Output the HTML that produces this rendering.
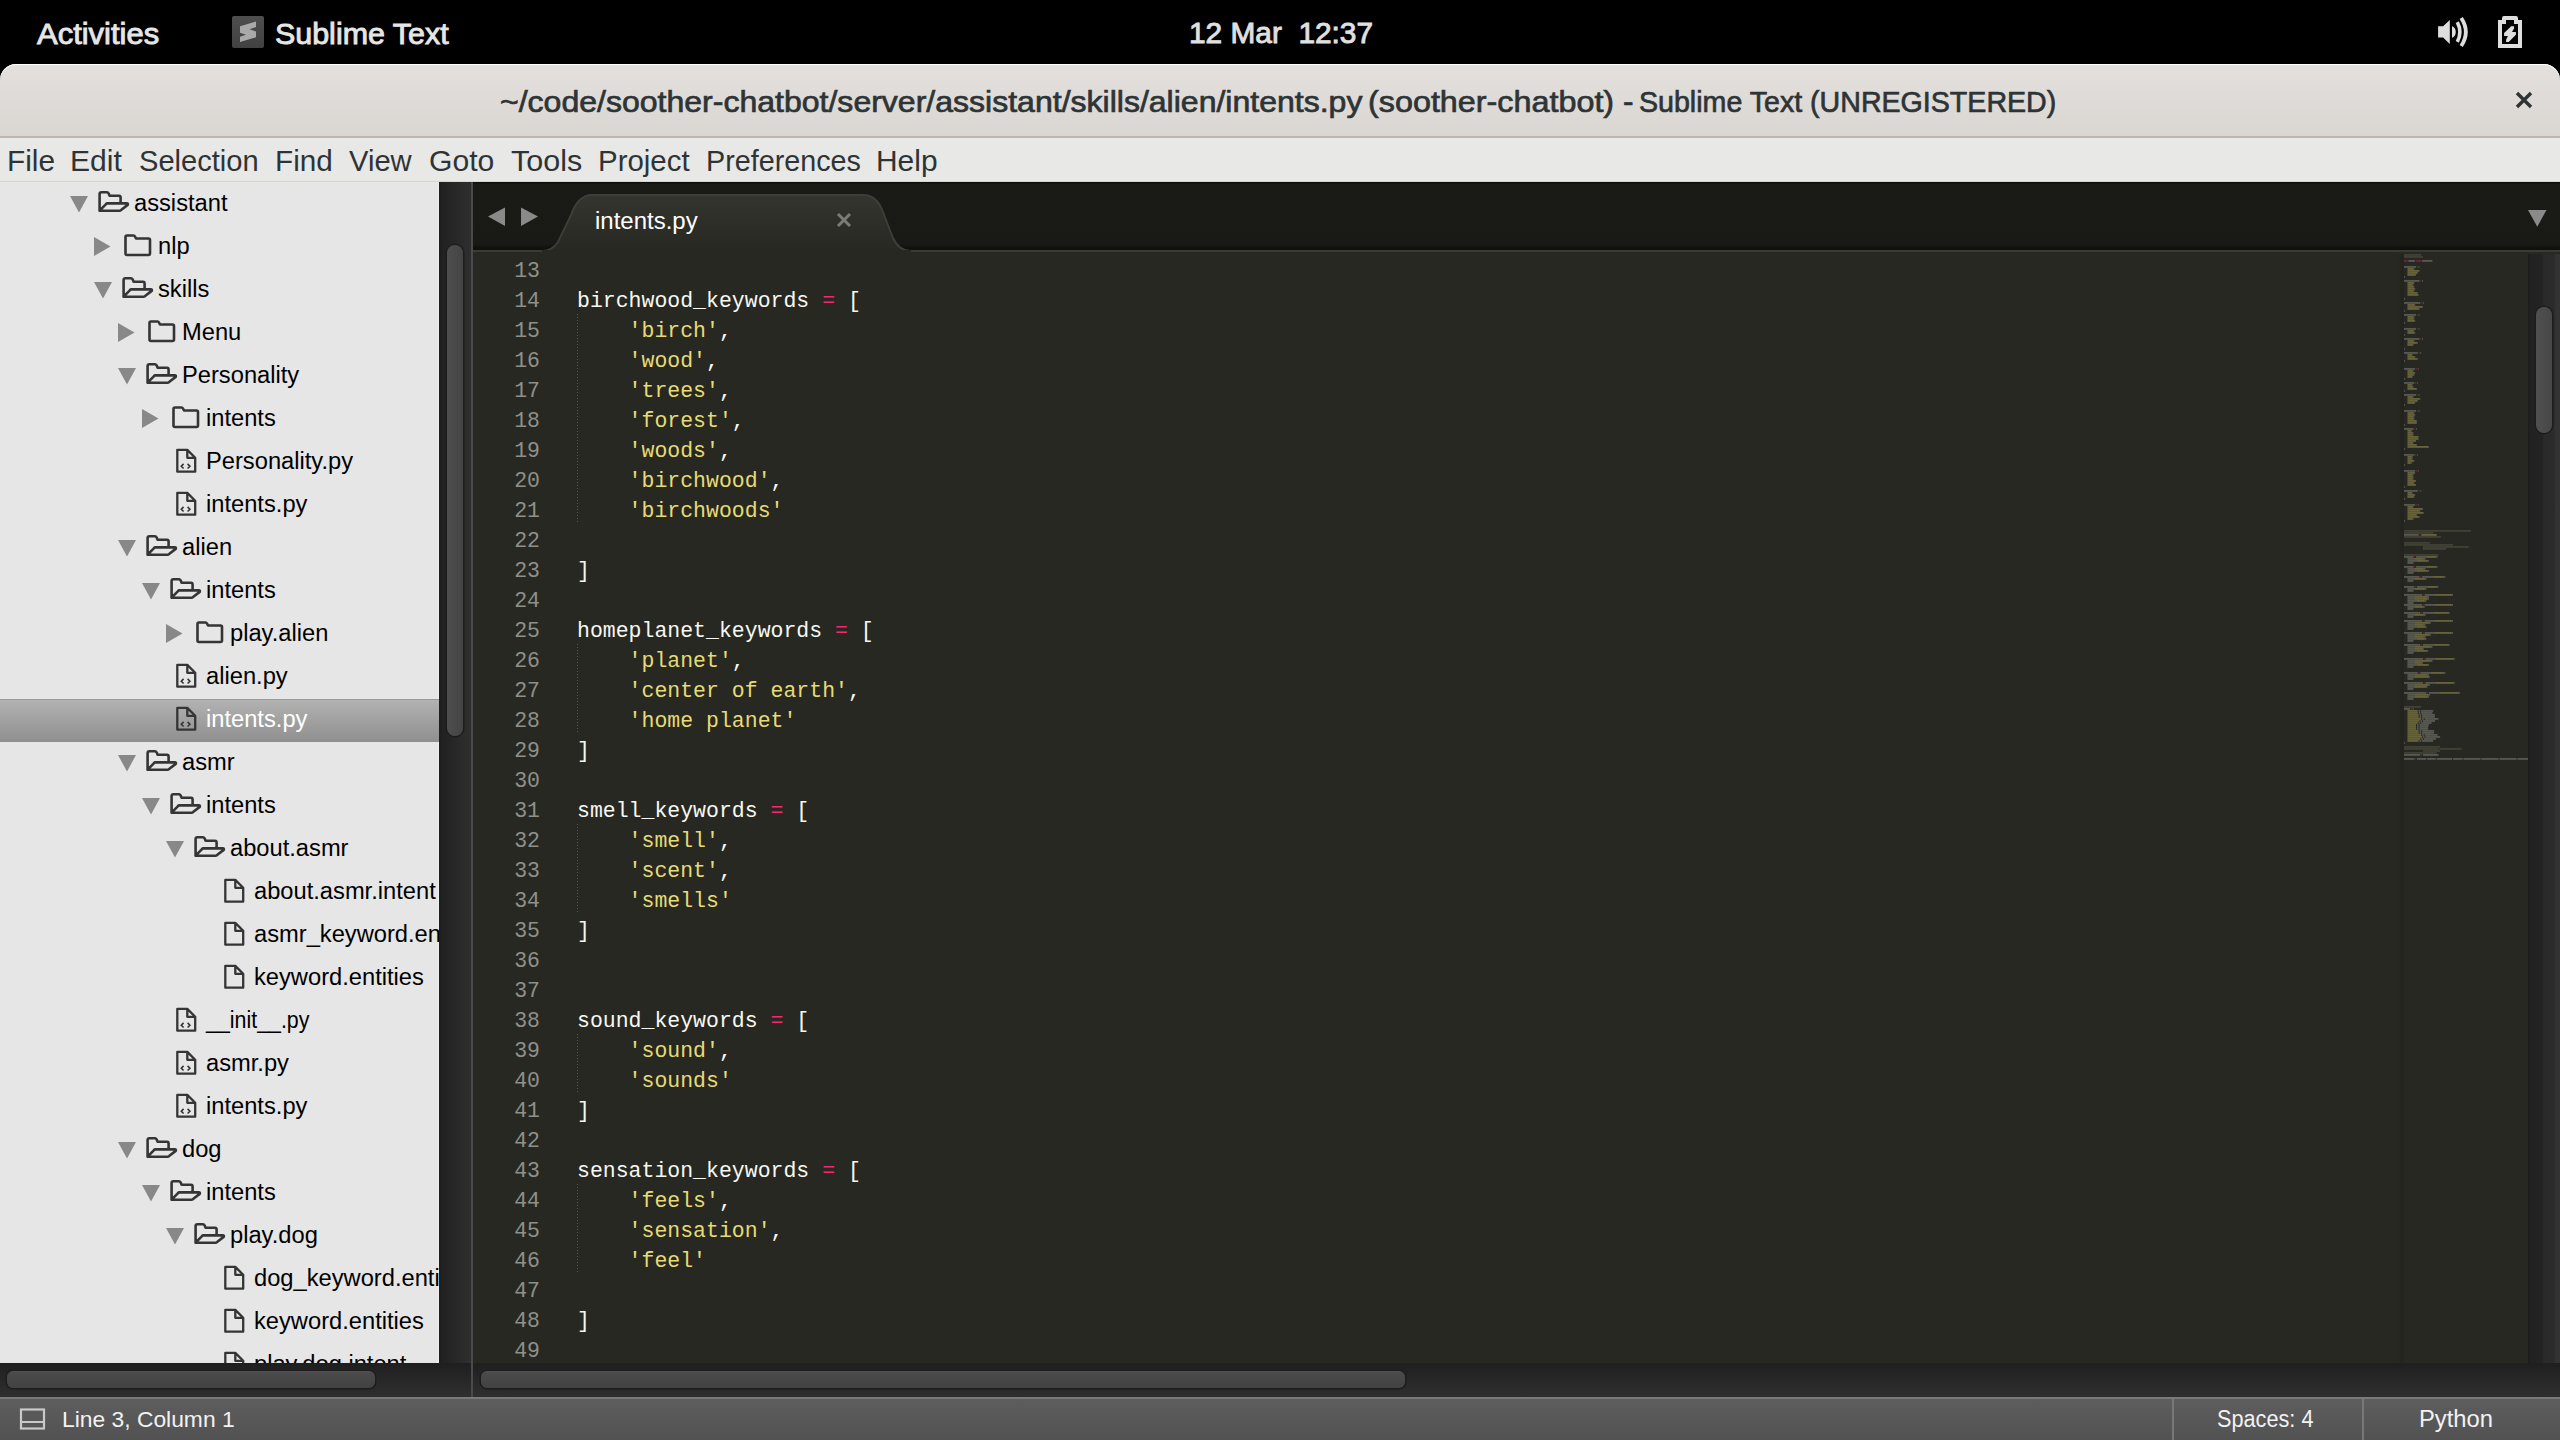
<!DOCTYPE html><html><head><meta charset="utf-8"><style>html,body{margin:0;padding:0;width:2560px;height:1440px;overflow:hidden;background:#000;position:relative}</style></head><body><div style="position:absolute;left:0px;top:0px;width:2560px;height:64px;background:#000"></div>
<div id="act" style="position:absolute;left:37.13px;top:16.28px;font:400 29.5px/35px 'Liberation Sans',sans-serif;color:#e6e6e6;white-space:pre;transform:scale(1.0494,1.0000);transform-origin:0 27.72px;-webkit-text-stroke:0.9px #e6e6e6;">Activities</div>
<svg style="position:absolute;left:232px;top:16px" width="32" height="32" viewBox="0 0 32 32">
<defs><linearGradient id="ig" x1="0" y1="0" x2="0" y2="1"><stop offset="0" stop-color="#4e4e4e"/><stop offset="1" stop-color="#414141"/></linearGradient></defs>
<rect x="0" y="0" width="32" height="32" rx="2" fill="url(#ig)"/>
<path d="M8 10.2 L24 5.6 L24 11.1 L17.5 13.2 L24 15.4 L24 21.3 L8 26.1 L8 20.7 L13.9 18.7 L8 16.8 Z" fill="#a9a9a9"/>
</svg>
<div id="st" style="position:absolute;left:275.00px;top:16.28px;font:400 29.5px/35px 'Liberation Sans',sans-serif;color:#e6e6e6;white-space:pre;transform:scale(1.0311,1.0000);transform-origin:0 27.72px;-webkit-text-stroke:0.9px #e6e6e6;">Sublime Text</div>
<div id="date" style="position:absolute;left:1188.76px;top:15.28px;font:400 29.5px/35px 'Liberation Sans',sans-serif;color:#e0e0e0;white-space:pre;transform:scale(1.0111,1.0000);transform-origin:0 27.72px;-webkit-text-stroke:0.9px #e0e0e0;">12 Mar  12:37</div>
<svg style="position:absolute;left:2436px;top:16px" width="34" height="32" viewBox="0 0 34 32">
<path d="M2.1 10.2 H7.1 L13.8 3.9 V27.9 L7.1 21.4 H2.1 Z" fill="#dedede"/>
<path d="M16 10.2 C21 11.5 21 20.4 16 21.7 Z" fill="#dedede"/>
<path d="M21.3 6.1 Q26.5 16 21.3 25.9" stroke="#dedede" stroke-width="3.6" fill="none"/>
<path d="M25.2 2 Q34.5 16 25.2 30" stroke="#dedede" stroke-width="3.8" fill="none"/>
</svg>
<svg style="position:absolute;left:2498px;top:16px" width="25" height="33" viewBox="0 0 25 33">
<path d="M6 0 H18 Q20 0 20 2 V4 H24 V32 H0 V4 H4 V2 Q4 0 6 0 Z M4 8 V28 H20 V8 H16 V4 H8 V8 Z" fill="#dedede" fill-rule="evenodd"/>
<path d="M13.2 10.2 H16 V12.4 L14 15.9 H17.9 V18.8 L10.7 25.9 H8.1 V23.8 L9.9 19.9 H6.1 V17.1 Z" fill="#dedede"/>
</svg>
<div style="position:absolute;left:0px;top:64px;width:2560px;height:73px;background:linear-gradient(#e3e0dd,#dad6d2);border-radius:16px 16px 0 0;box-shadow:inset 0 1px 0 #fff"></div>
<div style="position:absolute;left:0px;top:136px;width:2560px;height:2px;background:#bdb6af"></div>
<div id="title1" style="position:absolute;left:499.59px;top:83.60px;font:400 30px/36px 'Liberation Sans',sans-serif;color:#2e3436;white-space:pre;transform:scale(1.0675,1.0000);transform-origin:0 28.40px;-webkit-text-stroke:0.7px #2e3436;">~/code/soother-chatbot/server/assistant/skills/alien/intents.py</div>
<div id="title2" style="position:absolute;left:1368.38px;top:83.60px;font:400 30px/36px 'Liberation Sans',sans-serif;color:#2e3436;white-space:pre;transform:scale(1.0774,1.0000);transform-origin:0 28.40px;-webkit-text-stroke:0.7px #2e3436;">(soother-chatbot)</div>
<div id="title3" style="position:absolute;left:1622.75px;top:83.60px;font:400 30px/36px 'Liberation Sans',sans-serif;color:#2e3436;white-space:pre;transform:scale(1.0517,1.0000);transform-origin:0 28.40px;-webkit-text-stroke:0.7px #2e3436;">-</div>
<div id="title4" style="position:absolute;left:1639.41px;top:83.60px;font:400 30px/36px 'Liberation Sans',sans-serif;color:#2e3436;white-space:pre;transform:scale(0.9530,1.0000);transform-origin:0 28.40px;-webkit-text-stroke:0.7px #2e3436;">Sublime Text (UNREGISTERED)</div>
<svg style="position:absolute;left:2514px;top:90px" width="20" height="20" viewBox="0 0 20 20">
<path d="M3 3 L17 17 M17 3 L3 17" stroke="#2e3436" stroke-width="3.4" stroke-linecap="butt"/>
</svg>
<div style="position:absolute;left:0px;top:138px;width:2560px;height:43px;background:#e8e8e7"></div>
<div style="position:absolute;left:0px;top:181px;width:2560px;height:1px;background:#d5d5d3"></div>
<div id="m_File" style="position:absolute;left:7.00px;top:142.60px;font:400 30px/36px 'Liberation Sans',sans-serif;color:#2e3436;white-space:pre;transform:scale(0.9942,1.0000);transform-origin:0 28.40px;">File</div>
<div id="m_Edit" style="position:absolute;left:70.16px;top:142.60px;font:400 30px/36px 'Liberation Sans',sans-serif;color:#2e3436;white-space:pre;transform:scale(1.0029,1.0000);transform-origin:0 28.40px;">Edit</div>
<div id="m_Selection" style="position:absolute;left:138.78px;top:142.60px;font:400 30px/36px 'Liberation Sans',sans-serif;color:#2e3436;white-space:pre;transform:scale(0.9699,1.0000);transform-origin:0 28.40px;">Selection</div>
<div id="m_Find" style="position:absolute;left:274.84px;top:142.60px;font:400 30px/36px 'Liberation Sans',sans-serif;color:#2e3436;white-space:pre;transform:scale(0.9905,1.0000);transform-origin:0 28.40px;">Find</div>
<div id="m_View" style="position:absolute;left:348.70px;top:142.60px;font:400 30px/36px 'Liberation Sans',sans-serif;color:#2e3436;white-space:pre;transform:scale(0.9716,1.0000);transform-origin:0 28.40px;">View</div>
<div id="m_Goto" style="position:absolute;left:428.94px;top:142.60px;font:400 30px/36px 'Liberation Sans',sans-serif;color:#2e3436;white-space:pre;transform:scale(1.0041,1.0000);transform-origin:0 28.40px;">Goto</div>
<div id="m_Tools" style="position:absolute;left:510.81px;top:142.60px;font:400 30px/36px 'Liberation Sans',sans-serif;color:#2e3436;white-space:pre;transform:scale(1.0164,1.0000);transform-origin:0 28.40px;">Tools</div>
<div id="m_Project" style="position:absolute;left:598.03px;top:142.60px;font:400 30px/36px 'Liberation Sans',sans-serif;color:#2e3436;white-space:pre;transform:scale(0.9808,1.0000);transform-origin:0 28.40px;">Project</div>
<div id="m_Preferences" style="position:absolute;left:706.48px;top:142.60px;font:400 30px/36px 'Liberation Sans',sans-serif;color:#2e3436;white-space:pre;transform:scale(0.9578,1.0000);transform-origin:0 28.40px;">Preferences</div>
<div id="m_Help" style="position:absolute;left:875.64px;top:142.60px;font:400 30px/36px 'Liberation Sans',sans-serif;color:#2e3436;white-space:pre;transform:scale(0.9976,1.0000);transform-origin:0 28.40px;">Help</div>
<div style="position:absolute;left:0px;top:182px;width:439px;height:1181px;background:#e6e6e6"></div>
<div style="position:absolute;left:438px;top:182px;width:1px;height:1181px;background:#efefef"></div>
<div style="position:absolute;left:439px;top:182px;width:32px;height:1215px;background:linear-gradient(90deg,#1c1c1c 0px,#222 4px,#272727 16px,#2f2f2f 32px)"></div>
<div style="position:absolute;left:471px;top:182px;width:2px;height:1215px;background:#4a4a4a"></div>
<div style="position:absolute;left:447px;top:245px;width:16px;height:491px;background:linear-gradient(90deg,#4e4e4e,#444);border-radius:8.5px;box-shadow:0 0 0 1.5px #1d1d1d"></div>
<div style="position:absolute;left:0;top:182px;width:439px;height:1181px;overflow:hidden">
<svg style="position:absolute;left:70px;top:14px" width="18" height="17" viewBox="0 0 18 17"><path d="M0 0 H18 L9 16.5 Z" fill="#888888"/></svg>
<svg style="position:absolute;left:96px;top:9px" width="35" height="23" viewBox="0 0 35 23"><path d="M3.6 19.7 V3 Q3.6 1.3 5.3 1.3 H11 Q12 1.3 12.6 2.3 L13.6 4.8 H23 Q24.6 4.8 24.6 6.4 V11 M3.6 19.7 H23.8 Q24.8 19.7 25.4 18.8 L31.7 13.9 Q32.3 12.4 30.8 12.4 H11.6 Q10.4 12.4 9.8 13.3 Z" fill="none" stroke="#353535" stroke-width="2.6" stroke-linejoin="round"/></svg>
<div style="position:absolute;left:134.00px;top:7.03px;font:400 23px/28px 'Liberation Sans',sans-serif;color:#000000;white-space:pre;transform:scale(1.0300,1.0000);transform-origin:0 21.97px;">assistant</div>
<svg style="position:absolute;left:94px;top:54.5px" width="17" height="19" viewBox="0 0 17 19"><path d="M0 0 L16.5 9.5 L0 19 Z" fill="#888888"/></svg>
<svg style="position:absolute;left:124px;top:52px" width="28" height="23" viewBox="0 0 28 23"><path d="M1.5 3 Q1.5 1.5 3 1.5 H9.5 Q10.5 1.5 11 2.5 L12 4.5 H24.5 Q26 4.5 26 6 V19.5 Q26 21 24.5 21 H3 Q1.5 21 1.5 19.5 Z" fill="none" stroke="#353535" stroke-width="2.6" stroke-linejoin="round"/></svg>
<div style="position:absolute;left:158.00px;top:50.03px;font:400 23px/28px 'Liberation Sans',sans-serif;color:#000000;white-space:pre;transform:scale(1.0300,1.0000);transform-origin:0 21.97px;">nlp</div>
<svg style="position:absolute;left:94px;top:100px" width="18" height="17" viewBox="0 0 18 17"><path d="M0 0 H18 L9 16.5 Z" fill="#888888"/></svg>
<svg style="position:absolute;left:120px;top:95px" width="35" height="23" viewBox="0 0 35 23"><path d="M3.6 19.7 V3 Q3.6 1.3 5.3 1.3 H11 Q12 1.3 12.6 2.3 L13.6 4.8 H23 Q24.6 4.8 24.6 6.4 V11 M3.6 19.7 H23.8 Q24.8 19.7 25.4 18.8 L31.7 13.9 Q32.3 12.4 30.8 12.4 H11.6 Q10.4 12.4 9.8 13.3 Z" fill="none" stroke="#353535" stroke-width="2.6" stroke-linejoin="round"/></svg>
<div style="position:absolute;left:158.00px;top:93.03px;font:400 23px/28px 'Liberation Sans',sans-serif;color:#000000;white-space:pre;transform:scale(1.0300,1.0000);transform-origin:0 21.97px;">skills</div>
<svg style="position:absolute;left:118px;top:140.5px" width="17" height="19" viewBox="0 0 17 19"><path d="M0 0 L16.5 9.5 L0 19 Z" fill="#888888"/></svg>
<svg style="position:absolute;left:148px;top:138px" width="28" height="23" viewBox="0 0 28 23"><path d="M1.5 3 Q1.5 1.5 3 1.5 H9.5 Q10.5 1.5 11 2.5 L12 4.5 H24.5 Q26 4.5 26 6 V19.5 Q26 21 24.5 21 H3 Q1.5 21 1.5 19.5 Z" fill="none" stroke="#353535" stroke-width="2.6" stroke-linejoin="round"/></svg>
<div style="position:absolute;left:182.00px;top:136.03px;font:400 23px/28px 'Liberation Sans',sans-serif;color:#000000;white-space:pre;transform:scale(1.0300,1.0000);transform-origin:0 21.97px;">Menu</div>
<svg style="position:absolute;left:118px;top:186px" width="18" height="17" viewBox="0 0 18 17"><path d="M0 0 H18 L9 16.5 Z" fill="#888888"/></svg>
<svg style="position:absolute;left:144px;top:181px" width="35" height="23" viewBox="0 0 35 23"><path d="M3.6 19.7 V3 Q3.6 1.3 5.3 1.3 H11 Q12 1.3 12.6 2.3 L13.6 4.8 H23 Q24.6 4.8 24.6 6.4 V11 M3.6 19.7 H23.8 Q24.8 19.7 25.4 18.8 L31.7 13.9 Q32.3 12.4 30.8 12.4 H11.6 Q10.4 12.4 9.8 13.3 Z" fill="none" stroke="#353535" stroke-width="2.6" stroke-linejoin="round"/></svg>
<div style="position:absolute;left:182.00px;top:179.03px;font:400 23px/28px 'Liberation Sans',sans-serif;color:#000000;white-space:pre;transform:scale(1.0300,1.0000);transform-origin:0 21.97px;">Personality</div>
<svg style="position:absolute;left:142px;top:226.5px" width="17" height="19" viewBox="0 0 17 19"><path d="M0 0 L16.5 9.5 L0 19 Z" fill="#888888"/></svg>
<svg style="position:absolute;left:172px;top:224px" width="28" height="23" viewBox="0 0 28 23"><path d="M1.5 3 Q1.5 1.5 3 1.5 H9.5 Q10.5 1.5 11 2.5 L12 4.5 H24.5 Q26 4.5 26 6 V19.5 Q26 21 24.5 21 H3 Q1.5 21 1.5 19.5 Z" fill="none" stroke="#353535" stroke-width="2.6" stroke-linejoin="round"/></svg>
<div style="position:absolute;left:206.00px;top:222.03px;font:400 23px/28px 'Liberation Sans',sans-serif;color:#000000;white-space:pre;transform:scale(1.0300,1.0000);transform-origin:0 21.97px;">intents</div>
<svg style="position:absolute;left:175.5px;top:266px" width="22" height="26" viewBox="0 0 22 26"><path d="M1.3 1.9 H11.3 L19.2 9.8 V23.7 H1.3 Z M11.3 1.9 V9.8 H19.2" fill="none" stroke="#353535" stroke-width="2.3" stroke-linejoin="round"/><path d="M7.6 15.9 L5.3 18.2 L7.6 20.5 M11.6 15.9 L13.9 18.2 L11.6 20.5" fill="none" stroke="#353535" stroke-width="1.6"/></svg>
<div style="position:absolute;left:206.00px;top:265.03px;font:400 23px/28px 'Liberation Sans',sans-serif;color:#000000;white-space:pre;transform:scale(1.0300,1.0000);transform-origin:0 21.97px;">Personality.py</div>
<svg style="position:absolute;left:175.5px;top:309px" width="22" height="26" viewBox="0 0 22 26"><path d="M1.3 1.9 H11.3 L19.2 9.8 V23.7 H1.3 Z M11.3 1.9 V9.8 H19.2" fill="none" stroke="#353535" stroke-width="2.3" stroke-linejoin="round"/><path d="M7.6 15.9 L5.3 18.2 L7.6 20.5 M11.6 15.9 L13.9 18.2 L11.6 20.5" fill="none" stroke="#353535" stroke-width="1.6"/></svg>
<div style="position:absolute;left:206.00px;top:308.03px;font:400 23px/28px 'Liberation Sans',sans-serif;color:#000000;white-space:pre;transform:scale(1.0300,1.0000);transform-origin:0 21.97px;">intents.py</div>
<svg style="position:absolute;left:118px;top:358px" width="18" height="17" viewBox="0 0 18 17"><path d="M0 0 H18 L9 16.5 Z" fill="#888888"/></svg>
<svg style="position:absolute;left:144px;top:353px" width="35" height="23" viewBox="0 0 35 23"><path d="M3.6 19.7 V3 Q3.6 1.3 5.3 1.3 H11 Q12 1.3 12.6 2.3 L13.6 4.8 H23 Q24.6 4.8 24.6 6.4 V11 M3.6 19.7 H23.8 Q24.8 19.7 25.4 18.8 L31.7 13.9 Q32.3 12.4 30.8 12.4 H11.6 Q10.4 12.4 9.8 13.3 Z" fill="none" stroke="#353535" stroke-width="2.6" stroke-linejoin="round"/></svg>
<div style="position:absolute;left:182.00px;top:351.03px;font:400 23px/28px 'Liberation Sans',sans-serif;color:#000000;white-space:pre;transform:scale(1.0300,1.0000);transform-origin:0 21.97px;">alien</div>
<svg style="position:absolute;left:142px;top:401px" width="18" height="17" viewBox="0 0 18 17"><path d="M0 0 H18 L9 16.5 Z" fill="#888888"/></svg>
<svg style="position:absolute;left:168px;top:396px" width="35" height="23" viewBox="0 0 35 23"><path d="M3.6 19.7 V3 Q3.6 1.3 5.3 1.3 H11 Q12 1.3 12.6 2.3 L13.6 4.8 H23 Q24.6 4.8 24.6 6.4 V11 M3.6 19.7 H23.8 Q24.8 19.7 25.4 18.8 L31.7 13.9 Q32.3 12.4 30.8 12.4 H11.6 Q10.4 12.4 9.8 13.3 Z" fill="none" stroke="#353535" stroke-width="2.6" stroke-linejoin="round"/></svg>
<div style="position:absolute;left:206.00px;top:394.03px;font:400 23px/28px 'Liberation Sans',sans-serif;color:#000000;white-space:pre;transform:scale(1.0300,1.0000);transform-origin:0 21.97px;">intents</div>
<svg style="position:absolute;left:166px;top:441.5px" width="17" height="19" viewBox="0 0 17 19"><path d="M0 0 L16.5 9.5 L0 19 Z" fill="#888888"/></svg>
<svg style="position:absolute;left:196px;top:439px" width="28" height="23" viewBox="0 0 28 23"><path d="M1.5 3 Q1.5 1.5 3 1.5 H9.5 Q10.5 1.5 11 2.5 L12 4.5 H24.5 Q26 4.5 26 6 V19.5 Q26 21 24.5 21 H3 Q1.5 21 1.5 19.5 Z" fill="none" stroke="#353535" stroke-width="2.6" stroke-linejoin="round"/></svg>
<div style="position:absolute;left:230.00px;top:437.03px;font:400 23px/28px 'Liberation Sans',sans-serif;color:#000000;white-space:pre;transform:scale(1.0300,1.0000);transform-origin:0 21.97px;">play.alien</div>
<svg style="position:absolute;left:175.5px;top:481px" width="22" height="26" viewBox="0 0 22 26"><path d="M1.3 1.9 H11.3 L19.2 9.8 V23.7 H1.3 Z M11.3 1.9 V9.8 H19.2" fill="none" stroke="#353535" stroke-width="2.3" stroke-linejoin="round"/><path d="M7.6 15.9 L5.3 18.2 L7.6 20.5 M11.6 15.9 L13.9 18.2 L11.6 20.5" fill="none" stroke="#353535" stroke-width="1.6"/></svg>
<div style="position:absolute;left:206.00px;top:480.03px;font:400 23px/28px 'Liberation Sans',sans-serif;color:#000000;white-space:pre;transform:scale(1.0300,1.0000);transform-origin:0 21.97px;">alien.py</div>
<div style="position:absolute;left:0px;top:516.5px;width:439px;height:43px;background:linear-gradient(#b3b3b3,#8f8f8f);box-shadow:inset 0 1px 0 #9a9a9a"></div>
<svg style="position:absolute;left:175.5px;top:524px" width="22" height="26" viewBox="0 0 22 26"><path d="M1.3 1.9 H11.3 L19.2 9.8 V23.7 H1.3 Z M11.3 1.9 V9.8 H19.2" fill="none" stroke="#353535" stroke-width="2.3" stroke-linejoin="round"/><path d="M7.6 15.9 L5.3 18.2 L7.6 20.5 M11.6 15.9 L13.9 18.2 L11.6 20.5" fill="none" stroke="#353535" stroke-width="1.6"/></svg>
<div style="position:absolute;left:206.00px;top:523.03px;font:400 23px/28px 'Liberation Sans',sans-serif;color:#ffffff;white-space:pre;transform:scale(1.0300,1.0000);transform-origin:0 21.97px;">intents.py</div>
<svg style="position:absolute;left:118px;top:573px" width="18" height="17" viewBox="0 0 18 17"><path d="M0 0 H18 L9 16.5 Z" fill="#888888"/></svg>
<svg style="position:absolute;left:144px;top:568px" width="35" height="23" viewBox="0 0 35 23"><path d="M3.6 19.7 V3 Q3.6 1.3 5.3 1.3 H11 Q12 1.3 12.6 2.3 L13.6 4.8 H23 Q24.6 4.8 24.6 6.4 V11 M3.6 19.7 H23.8 Q24.8 19.7 25.4 18.8 L31.7 13.9 Q32.3 12.4 30.8 12.4 H11.6 Q10.4 12.4 9.8 13.3 Z" fill="none" stroke="#353535" stroke-width="2.6" stroke-linejoin="round"/></svg>
<div style="position:absolute;left:182.00px;top:566.03px;font:400 23px/28px 'Liberation Sans',sans-serif;color:#000000;white-space:pre;transform:scale(1.0300,1.0000);transform-origin:0 21.97px;">asmr</div>
<svg style="position:absolute;left:142px;top:616px" width="18" height="17" viewBox="0 0 18 17"><path d="M0 0 H18 L9 16.5 Z" fill="#888888"/></svg>
<svg style="position:absolute;left:168px;top:611px" width="35" height="23" viewBox="0 0 35 23"><path d="M3.6 19.7 V3 Q3.6 1.3 5.3 1.3 H11 Q12 1.3 12.6 2.3 L13.6 4.8 H23 Q24.6 4.8 24.6 6.4 V11 M3.6 19.7 H23.8 Q24.8 19.7 25.4 18.8 L31.7 13.9 Q32.3 12.4 30.8 12.4 H11.6 Q10.4 12.4 9.8 13.3 Z" fill="none" stroke="#353535" stroke-width="2.6" stroke-linejoin="round"/></svg>
<div style="position:absolute;left:206.00px;top:609.03px;font:400 23px/28px 'Liberation Sans',sans-serif;color:#000000;white-space:pre;transform:scale(1.0300,1.0000);transform-origin:0 21.97px;">intents</div>
<svg style="position:absolute;left:166px;top:659px" width="18" height="17" viewBox="0 0 18 17"><path d="M0 0 H18 L9 16.5 Z" fill="#888888"/></svg>
<svg style="position:absolute;left:192px;top:654px" width="35" height="23" viewBox="0 0 35 23"><path d="M3.6 19.7 V3 Q3.6 1.3 5.3 1.3 H11 Q12 1.3 12.6 2.3 L13.6 4.8 H23 Q24.6 4.8 24.6 6.4 V11 M3.6 19.7 H23.8 Q24.8 19.7 25.4 18.8 L31.7 13.9 Q32.3 12.4 30.8 12.4 H11.6 Q10.4 12.4 9.8 13.3 Z" fill="none" stroke="#353535" stroke-width="2.6" stroke-linejoin="round"/></svg>
<div style="position:absolute;left:230.00px;top:652.03px;font:400 23px/28px 'Liberation Sans',sans-serif;color:#000000;white-space:pre;transform:scale(1.0300,1.0000);transform-origin:0 21.97px;">about.asmr</div>
<svg style="position:absolute;left:223.5px;top:696px" width="22" height="26" viewBox="0 0 22 26"><path d="M1.3 1.9 H11.3 L19.2 9.8 V23.7 H1.3 Z M11.3 1.9 V9.8 H19.2" fill="none" stroke="#353535" stroke-width="2.3" stroke-linejoin="round"/></svg>
<div style="position:absolute;left:254.00px;top:695.03px;font:400 23px/28px 'Liberation Sans',sans-serif;color:#000000;white-space:pre;transform:scale(1.0300,1.0000);transform-origin:0 21.97px;">about.asmr.intent</div>
<svg style="position:absolute;left:223.5px;top:739px" width="22" height="26" viewBox="0 0 22 26"><path d="M1.3 1.9 H11.3 L19.2 9.8 V23.7 H1.3 Z M11.3 1.9 V9.8 H19.2" fill="none" stroke="#353535" stroke-width="2.3" stroke-linejoin="round"/></svg>
<div style="position:absolute;left:254.00px;top:738.03px;font:400 23px/28px 'Liberation Sans',sans-serif;color:#000000;white-space:pre;transform:scale(1.0300,1.0000);transform-origin:0 21.97px;">asmr_keyword.entities</div>
<svg style="position:absolute;left:223.5px;top:782px" width="22" height="26" viewBox="0 0 22 26"><path d="M1.3 1.9 H11.3 L19.2 9.8 V23.7 H1.3 Z M11.3 1.9 V9.8 H19.2" fill="none" stroke="#353535" stroke-width="2.3" stroke-linejoin="round"/></svg>
<div style="position:absolute;left:254.00px;top:781.03px;font:400 23px/28px 'Liberation Sans',sans-serif;color:#000000;white-space:pre;transform:scale(1.0300,1.0000);transform-origin:0 21.97px;">keyword.entities</div>
<svg style="position:absolute;left:175.5px;top:825px" width="22" height="26" viewBox="0 0 22 26"><path d="M1.3 1.9 H11.3 L19.2 9.8 V23.7 H1.3 Z M11.3 1.9 V9.8 H19.2" fill="none" stroke="#353535" stroke-width="2.3" stroke-linejoin="round"/><path d="M7.6 15.9 L5.3 18.2 L7.6 20.5 M11.6 15.9 L13.9 18.2 L11.6 20.5" fill="none" stroke="#353535" stroke-width="1.6"/></svg>
<div style="position:absolute;left:206.00px;top:824.03px;font:400 23px/28px 'Liberation Sans',sans-serif;color:#000000;white-space:pre;transform:scale(0.9300,1.0000);transform-origin:0 21.97px;">__init__.py</div>
<svg style="position:absolute;left:175.5px;top:868px" width="22" height="26" viewBox="0 0 22 26"><path d="M1.3 1.9 H11.3 L19.2 9.8 V23.7 H1.3 Z M11.3 1.9 V9.8 H19.2" fill="none" stroke="#353535" stroke-width="2.3" stroke-linejoin="round"/><path d="M7.6 15.9 L5.3 18.2 L7.6 20.5 M11.6 15.9 L13.9 18.2 L11.6 20.5" fill="none" stroke="#353535" stroke-width="1.6"/></svg>
<div style="position:absolute;left:206.00px;top:867.03px;font:400 23px/28px 'Liberation Sans',sans-serif;color:#000000;white-space:pre;transform:scale(1.0300,1.0000);transform-origin:0 21.97px;">asmr.py</div>
<svg style="position:absolute;left:175.5px;top:911px" width="22" height="26" viewBox="0 0 22 26"><path d="M1.3 1.9 H11.3 L19.2 9.8 V23.7 H1.3 Z M11.3 1.9 V9.8 H19.2" fill="none" stroke="#353535" stroke-width="2.3" stroke-linejoin="round"/><path d="M7.6 15.9 L5.3 18.2 L7.6 20.5 M11.6 15.9 L13.9 18.2 L11.6 20.5" fill="none" stroke="#353535" stroke-width="1.6"/></svg>
<div style="position:absolute;left:206.00px;top:910.03px;font:400 23px/28px 'Liberation Sans',sans-serif;color:#000000;white-space:pre;transform:scale(1.0300,1.0000);transform-origin:0 21.97px;">intents.py</div>
<svg style="position:absolute;left:118px;top:960px" width="18" height="17" viewBox="0 0 18 17"><path d="M0 0 H18 L9 16.5 Z" fill="#888888"/></svg>
<svg style="position:absolute;left:144px;top:955px" width="35" height="23" viewBox="0 0 35 23"><path d="M3.6 19.7 V3 Q3.6 1.3 5.3 1.3 H11 Q12 1.3 12.6 2.3 L13.6 4.8 H23 Q24.6 4.8 24.6 6.4 V11 M3.6 19.7 H23.8 Q24.8 19.7 25.4 18.8 L31.7 13.9 Q32.3 12.4 30.8 12.4 H11.6 Q10.4 12.4 9.8 13.3 Z" fill="none" stroke="#353535" stroke-width="2.6" stroke-linejoin="round"/></svg>
<div style="position:absolute;left:182.00px;top:953.03px;font:400 23px/28px 'Liberation Sans',sans-serif;color:#000000;white-space:pre;transform:scale(1.0300,1.0000);transform-origin:0 21.97px;">dog</div>
<svg style="position:absolute;left:142px;top:1003px" width="18" height="17" viewBox="0 0 18 17"><path d="M0 0 H18 L9 16.5 Z" fill="#888888"/></svg>
<svg style="position:absolute;left:168px;top:998px" width="35" height="23" viewBox="0 0 35 23"><path d="M3.6 19.7 V3 Q3.6 1.3 5.3 1.3 H11 Q12 1.3 12.6 2.3 L13.6 4.8 H23 Q24.6 4.8 24.6 6.4 V11 M3.6 19.7 H23.8 Q24.8 19.7 25.4 18.8 L31.7 13.9 Q32.3 12.4 30.8 12.4 H11.6 Q10.4 12.4 9.8 13.3 Z" fill="none" stroke="#353535" stroke-width="2.6" stroke-linejoin="round"/></svg>
<div style="position:absolute;left:206.00px;top:996.03px;font:400 23px/28px 'Liberation Sans',sans-serif;color:#000000;white-space:pre;transform:scale(1.0300,1.0000);transform-origin:0 21.97px;">intents</div>
<svg style="position:absolute;left:166px;top:1046px" width="18" height="17" viewBox="0 0 18 17"><path d="M0 0 H18 L9 16.5 Z" fill="#888888"/></svg>
<svg style="position:absolute;left:192px;top:1041px" width="35" height="23" viewBox="0 0 35 23"><path d="M3.6 19.7 V3 Q3.6 1.3 5.3 1.3 H11 Q12 1.3 12.6 2.3 L13.6 4.8 H23 Q24.6 4.8 24.6 6.4 V11 M3.6 19.7 H23.8 Q24.8 19.7 25.4 18.8 L31.7 13.9 Q32.3 12.4 30.8 12.4 H11.6 Q10.4 12.4 9.8 13.3 Z" fill="none" stroke="#353535" stroke-width="2.6" stroke-linejoin="round"/></svg>
<div style="position:absolute;left:230.00px;top:1039.03px;font:400 23px/28px 'Liberation Sans',sans-serif;color:#000000;white-space:pre;transform:scale(1.0300,1.0000);transform-origin:0 21.97px;">play.dog</div>
<svg style="position:absolute;left:223.5px;top:1083px" width="22" height="26" viewBox="0 0 22 26"><path d="M1.3 1.9 H11.3 L19.2 9.8 V23.7 H1.3 Z M11.3 1.9 V9.8 H19.2" fill="none" stroke="#353535" stroke-width="2.3" stroke-linejoin="round"/></svg>
<div style="position:absolute;left:254.00px;top:1082.03px;font:400 23px/28px 'Liberation Sans',sans-serif;color:#000000;white-space:pre;transform:scale(1.0300,1.0000);transform-origin:0 21.97px;">dog_keyword.entities</div>
<svg style="position:absolute;left:223.5px;top:1126px" width="22" height="26" viewBox="0 0 22 26"><path d="M1.3 1.9 H11.3 L19.2 9.8 V23.7 H1.3 Z M11.3 1.9 V9.8 H19.2" fill="none" stroke="#353535" stroke-width="2.3" stroke-linejoin="round"/></svg>
<div style="position:absolute;left:254.00px;top:1125.03px;font:400 23px/28px 'Liberation Sans',sans-serif;color:#000000;white-space:pre;transform:scale(1.0300,1.0000);transform-origin:0 21.97px;">keyword.entities</div>
<svg style="position:absolute;left:223.5px;top:1169px" width="22" height="26" viewBox="0 0 22 26"><path d="M1.3 1.9 H11.3 L19.2 9.8 V23.7 H1.3 Z M11.3 1.9 V9.8 H19.2" fill="none" stroke="#353535" stroke-width="2.3" stroke-linejoin="round"/></svg>
<div style="position:absolute;left:254.00px;top:1168.03px;font:400 23px/28px 'Liberation Sans',sans-serif;color:#000000;white-space:pre;transform:scale(1.0300,1.0000);transform-origin:0 21.97px;">play.dog.intent</div>
</div>
<div style="position:absolute;left:0px;top:1363px;width:471px;height:34px;background:linear-gradient(#1f1f1f,#2f2f2f)"></div>
<div style="position:absolute;left:7px;top:1371px;width:368px;height:17px;background:linear-gradient(#525252 0,#4a4a4a 2px,#424242);border-radius:6px;box-shadow:0 0 0 1.5px #1d1d1d"></div>
<div style="position:absolute;left:473px;top:182px;width:2087px;height:70px;background:linear-gradient(#0a0a08 0px,#1a1b16 2px,#191a15 62px,#10100d 66px,#10100d 68px)"></div>
<div style="position:absolute;left:473px;top:250px;width:2087px;height:2px;background:#3a3b35"></div>
<svg style="position:absolute;left:488px;top:207px" width="50" height="20" viewBox="0 0 50 20"><path d="M0 9.5 L17 0.5 V19 Z" fill="#8a8a8a"/><path d="M33 0.5 L50 9.5 L33 19 Z" fill="#8a8a8a"/></svg>
<svg style="position:absolute;left:540px;top:190px" width="380" height="64" viewBox="0 0 380 64">
<defs><linearGradient id="tg" x1="0" y1="0" x2="0" y2="1"><stop offset="0" stop-color="#34352f"/><stop offset="1" stop-color="#272822"/></linearGradient></defs>
<path d="M2 61 Q12 61 18 52 L31 25 Q38 5 52 5 H323 Q337 5 343 22 L353 48 Q359 61 371 61 Z" fill="url(#tg)" stroke="#3e3f39" stroke-width="1.8"/>
<rect x="2" y="60" width="369" height="4" fill="#272822"/>
</svg>
<div id="tab" style="position:absolute;left:594.75px;top:207.03px;font:400 23px/28px 'Liberation Sans',sans-serif;color:#ffffff;white-space:pre;transform:scale(1.0431,1.0000);transform-origin:0 21.97px;">intents.py</div>
<svg style="position:absolute;left:836px;top:212px" width="16" height="16" viewBox="0 0 16 16"><path d="M2 2 L14 14 M14 2 L2 14" stroke="#7b7c77" stroke-width="3"/></svg>
<svg style="position:absolute;left:2527.5px;top:209.5px" width="19" height="17" viewBox="0 0 19 17"><path d="M0 0 H18.5 L9.25 16.8 Z" fill="#8a8a8a"/></svg>
<div style="position:absolute;left:473px;top:252px;width:2087px;height:1111px;background:#272822"></div>
<div style="position:absolute;left:2528px;top:254px;width:32px;height:1109px;background:linear-gradient(90deg,#1d1d1d 0px,#222 3px,#232323 14px,#2a2a2a 16px,#2b2b2b 26px,#333 28px)"></div>
<div style="position:absolute;left:2397px;top:254px;width:7px;height:1109px;background:linear-gradient(90deg,rgba(0,0,0,0),rgba(0,0,0,0.12) 80%,rgba(0,0,0,0.05))"></div>
<div style="position:absolute;left:2536px;top:307px;width:16px;height:126px;background:linear-gradient(90deg,#505050,#474747);border-radius:8px;box-shadow:0 0 0 1.5px #1d1d1d"></div>
<div style="position:absolute;left:473px;top:1363px;width:2087px;height:34px;background:linear-gradient(#1f1f1f,#2f2f2f)"></div>
<div style="position:absolute;left:481px;top:1371px;width:924px;height:17px;background:linear-gradient(#525252 0,#4a4a4a 2px,#424242);border-radius:6px;box-shadow:0 0 0 1.5px #1d1d1d"></div>
<div style="position:absolute;left:473px;top:252px;width:1930px;height:1111px;overflow:hidden">
<div style="position:absolute;left:104px;top:4.27px;font:400 21.5px/30px 'Liberation Mono',monospace;color:#f8f8f2;white-space:pre;transform:scaleY(1.06);transform-origin:0 20.73px"></div>
<div style="position:absolute;left:7px;width:60px;text-align:right;top:4.27px;font:400 21.5px/30px 'Liberation Mono',monospace;color:#90908a;white-space:pre;transform:scaleY(1.06);transform-origin:0 20.73px">13</div>
<div style="position:absolute;left:104px;top:34.27px;font:400 21.5px/30px 'Liberation Mono',monospace;color:#f8f8f2;white-space:pre;transform:scaleY(1.06);transform-origin:0 20.73px">birchwood_keywords <span style="color:#f92672">=</span> [</div>
<div style="position:absolute;left:7px;width:60px;text-align:right;top:34.27px;font:400 21.5px/30px 'Liberation Mono',monospace;color:#90908a;white-space:pre;transform:scaleY(1.06);transform-origin:0 20.73px">14</div>
<div style="position:absolute;left:104px;top:64.27px;font:400 21.5px/30px 'Liberation Mono',monospace;color:#f8f8f2;white-space:pre;transform:scaleY(1.06);transform-origin:0 20.73px">    <span style="color:#e6db74">'birch'</span>,</div>
<div style="position:absolute;left:7px;width:60px;text-align:right;top:64.27px;font:400 21.5px/30px 'Liberation Mono',monospace;color:#90908a;white-space:pre;transform:scaleY(1.06);transform-origin:0 20.73px">15</div>
<div style="position:absolute;left:104px;top:62px;width:1px;height:30px;background:repeating-linear-gradient(#55564f 0 1px,transparent 1px 3px)"></div>
<div style="position:absolute;left:104px;top:94.27px;font:400 21.5px/30px 'Liberation Mono',monospace;color:#f8f8f2;white-space:pre;transform:scaleY(1.06);transform-origin:0 20.73px">    <span style="color:#e6db74">'wood'</span>,</div>
<div style="position:absolute;left:7px;width:60px;text-align:right;top:94.27px;font:400 21.5px/30px 'Liberation Mono',monospace;color:#90908a;white-space:pre;transform:scaleY(1.06);transform-origin:0 20.73px">16</div>
<div style="position:absolute;left:104px;top:92px;width:1px;height:30px;background:repeating-linear-gradient(#55564f 0 1px,transparent 1px 3px)"></div>
<div style="position:absolute;left:104px;top:124.27px;font:400 21.5px/30px 'Liberation Mono',monospace;color:#f8f8f2;white-space:pre;transform:scaleY(1.06);transform-origin:0 20.73px">    <span style="color:#e6db74">'trees'</span>,</div>
<div style="position:absolute;left:7px;width:60px;text-align:right;top:124.27px;font:400 21.5px/30px 'Liberation Mono',monospace;color:#90908a;white-space:pre;transform:scaleY(1.06);transform-origin:0 20.73px">17</div>
<div style="position:absolute;left:104px;top:122px;width:1px;height:30px;background:repeating-linear-gradient(#55564f 0 1px,transparent 1px 3px)"></div>
<div style="position:absolute;left:104px;top:154.27px;font:400 21.5px/30px 'Liberation Mono',monospace;color:#f8f8f2;white-space:pre;transform:scaleY(1.06);transform-origin:0 20.73px">    <span style="color:#e6db74">'forest'</span>,</div>
<div style="position:absolute;left:7px;width:60px;text-align:right;top:154.27px;font:400 21.5px/30px 'Liberation Mono',monospace;color:#90908a;white-space:pre;transform:scaleY(1.06);transform-origin:0 20.73px">18</div>
<div style="position:absolute;left:104px;top:152px;width:1px;height:30px;background:repeating-linear-gradient(#55564f 0 1px,transparent 1px 3px)"></div>
<div style="position:absolute;left:104px;top:184.27px;font:400 21.5px/30px 'Liberation Mono',monospace;color:#f8f8f2;white-space:pre;transform:scaleY(1.06);transform-origin:0 20.73px">    <span style="color:#e6db74">'woods'</span>,</div>
<div style="position:absolute;left:7px;width:60px;text-align:right;top:184.27px;font:400 21.5px/30px 'Liberation Mono',monospace;color:#90908a;white-space:pre;transform:scaleY(1.06);transform-origin:0 20.73px">19</div>
<div style="position:absolute;left:104px;top:182px;width:1px;height:30px;background:repeating-linear-gradient(#55564f 0 1px,transparent 1px 3px)"></div>
<div style="position:absolute;left:104px;top:214.27px;font:400 21.5px/30px 'Liberation Mono',monospace;color:#f8f8f2;white-space:pre;transform:scaleY(1.06);transform-origin:0 20.73px">    <span style="color:#e6db74">'birchwood'</span>,</div>
<div style="position:absolute;left:7px;width:60px;text-align:right;top:214.27px;font:400 21.5px/30px 'Liberation Mono',monospace;color:#90908a;white-space:pre;transform:scaleY(1.06);transform-origin:0 20.73px">20</div>
<div style="position:absolute;left:104px;top:212px;width:1px;height:30px;background:repeating-linear-gradient(#55564f 0 1px,transparent 1px 3px)"></div>
<div style="position:absolute;left:104px;top:244.27px;font:400 21.5px/30px 'Liberation Mono',monospace;color:#f8f8f2;white-space:pre;transform:scaleY(1.06);transform-origin:0 20.73px">    <span style="color:#e6db74">'birchwoods'</span></div>
<div style="position:absolute;left:7px;width:60px;text-align:right;top:244.27px;font:400 21.5px/30px 'Liberation Mono',monospace;color:#90908a;white-space:pre;transform:scaleY(1.06);transform-origin:0 20.73px">21</div>
<div style="position:absolute;left:104px;top:242px;width:1px;height:30px;background:repeating-linear-gradient(#55564f 0 1px,transparent 1px 3px)"></div>
<div style="position:absolute;left:104px;top:274.27px;font:400 21.5px/30px 'Liberation Mono',monospace;color:#f8f8f2;white-space:pre;transform:scaleY(1.06);transform-origin:0 20.73px"></div>
<div style="position:absolute;left:7px;width:60px;text-align:right;top:274.27px;font:400 21.5px/30px 'Liberation Mono',monospace;color:#90908a;white-space:pre;transform:scaleY(1.06);transform-origin:0 20.73px">22</div>
<div style="position:absolute;left:104px;top:304.27px;font:400 21.5px/30px 'Liberation Mono',monospace;color:#f8f8f2;white-space:pre;transform:scaleY(1.06);transform-origin:0 20.73px">]</div>
<div style="position:absolute;left:7px;width:60px;text-align:right;top:304.27px;font:400 21.5px/30px 'Liberation Mono',monospace;color:#90908a;white-space:pre;transform:scaleY(1.06);transform-origin:0 20.73px">23</div>
<div style="position:absolute;left:104px;top:334.27px;font:400 21.5px/30px 'Liberation Mono',monospace;color:#f8f8f2;white-space:pre;transform:scaleY(1.06);transform-origin:0 20.73px"></div>
<div style="position:absolute;left:7px;width:60px;text-align:right;top:334.27px;font:400 21.5px/30px 'Liberation Mono',monospace;color:#90908a;white-space:pre;transform:scaleY(1.06);transform-origin:0 20.73px">24</div>
<div style="position:absolute;left:104px;top:364.27px;font:400 21.5px/30px 'Liberation Mono',monospace;color:#f8f8f2;white-space:pre;transform:scaleY(1.06);transform-origin:0 20.73px">homeplanet_keywords <span style="color:#f92672">=</span> [</div>
<div style="position:absolute;left:7px;width:60px;text-align:right;top:364.27px;font:400 21.5px/30px 'Liberation Mono',monospace;color:#90908a;white-space:pre;transform:scaleY(1.06);transform-origin:0 20.73px">25</div>
<div style="position:absolute;left:104px;top:394.27px;font:400 21.5px/30px 'Liberation Mono',monospace;color:#f8f8f2;white-space:pre;transform:scaleY(1.06);transform-origin:0 20.73px">    <span style="color:#e6db74">'planet'</span>,</div>
<div style="position:absolute;left:7px;width:60px;text-align:right;top:394.27px;font:400 21.5px/30px 'Liberation Mono',monospace;color:#90908a;white-space:pre;transform:scaleY(1.06);transform-origin:0 20.73px">26</div>
<div style="position:absolute;left:104px;top:392px;width:1px;height:30px;background:repeating-linear-gradient(#55564f 0 1px,transparent 1px 3px)"></div>
<div style="position:absolute;left:104px;top:424.27px;font:400 21.5px/30px 'Liberation Mono',monospace;color:#f8f8f2;white-space:pre;transform:scaleY(1.06);transform-origin:0 20.73px">    <span style="color:#e6db74">'center of earth'</span>,</div>
<div style="position:absolute;left:7px;width:60px;text-align:right;top:424.27px;font:400 21.5px/30px 'Liberation Mono',monospace;color:#90908a;white-space:pre;transform:scaleY(1.06);transform-origin:0 20.73px">27</div>
<div style="position:absolute;left:104px;top:422px;width:1px;height:30px;background:repeating-linear-gradient(#55564f 0 1px,transparent 1px 3px)"></div>
<div style="position:absolute;left:104px;top:454.27px;font:400 21.5px/30px 'Liberation Mono',monospace;color:#f8f8f2;white-space:pre;transform:scaleY(1.06);transform-origin:0 20.73px">    <span style="color:#e6db74">'home planet'</span></div>
<div style="position:absolute;left:7px;width:60px;text-align:right;top:454.27px;font:400 21.5px/30px 'Liberation Mono',monospace;color:#90908a;white-space:pre;transform:scaleY(1.06);transform-origin:0 20.73px">28</div>
<div style="position:absolute;left:104px;top:452px;width:1px;height:30px;background:repeating-linear-gradient(#55564f 0 1px,transparent 1px 3px)"></div>
<div style="position:absolute;left:104px;top:484.27px;font:400 21.5px/30px 'Liberation Mono',monospace;color:#f8f8f2;white-space:pre;transform:scaleY(1.06);transform-origin:0 20.73px">]</div>
<div style="position:absolute;left:7px;width:60px;text-align:right;top:484.27px;font:400 21.5px/30px 'Liberation Mono',monospace;color:#90908a;white-space:pre;transform:scaleY(1.06);transform-origin:0 20.73px">29</div>
<div style="position:absolute;left:104px;top:514.27px;font:400 21.5px/30px 'Liberation Mono',monospace;color:#f8f8f2;white-space:pre;transform:scaleY(1.06);transform-origin:0 20.73px"></div>
<div style="position:absolute;left:7px;width:60px;text-align:right;top:514.27px;font:400 21.5px/30px 'Liberation Mono',monospace;color:#90908a;white-space:pre;transform:scaleY(1.06);transform-origin:0 20.73px">30</div>
<div style="position:absolute;left:104px;top:544.27px;font:400 21.5px/30px 'Liberation Mono',monospace;color:#f8f8f2;white-space:pre;transform:scaleY(1.06);transform-origin:0 20.73px">smell_keywords <span style="color:#f92672">=</span> [</div>
<div style="position:absolute;left:7px;width:60px;text-align:right;top:544.27px;font:400 21.5px/30px 'Liberation Mono',monospace;color:#90908a;white-space:pre;transform:scaleY(1.06);transform-origin:0 20.73px">31</div>
<div style="position:absolute;left:104px;top:574.27px;font:400 21.5px/30px 'Liberation Mono',monospace;color:#f8f8f2;white-space:pre;transform:scaleY(1.06);transform-origin:0 20.73px">    <span style="color:#e6db74">'smell'</span>,</div>
<div style="position:absolute;left:7px;width:60px;text-align:right;top:574.27px;font:400 21.5px/30px 'Liberation Mono',monospace;color:#90908a;white-space:pre;transform:scaleY(1.06);transform-origin:0 20.73px">32</div>
<div style="position:absolute;left:104px;top:572px;width:1px;height:30px;background:repeating-linear-gradient(#55564f 0 1px,transparent 1px 3px)"></div>
<div style="position:absolute;left:104px;top:604.27px;font:400 21.5px/30px 'Liberation Mono',monospace;color:#f8f8f2;white-space:pre;transform:scaleY(1.06);transform-origin:0 20.73px">    <span style="color:#e6db74">'scent'</span>,</div>
<div style="position:absolute;left:7px;width:60px;text-align:right;top:604.27px;font:400 21.5px/30px 'Liberation Mono',monospace;color:#90908a;white-space:pre;transform:scaleY(1.06);transform-origin:0 20.73px">33</div>
<div style="position:absolute;left:104px;top:602px;width:1px;height:30px;background:repeating-linear-gradient(#55564f 0 1px,transparent 1px 3px)"></div>
<div style="position:absolute;left:104px;top:634.27px;font:400 21.5px/30px 'Liberation Mono',monospace;color:#f8f8f2;white-space:pre;transform:scaleY(1.06);transform-origin:0 20.73px">    <span style="color:#e6db74">'smells'</span></div>
<div style="position:absolute;left:7px;width:60px;text-align:right;top:634.27px;font:400 21.5px/30px 'Liberation Mono',monospace;color:#90908a;white-space:pre;transform:scaleY(1.06);transform-origin:0 20.73px">34</div>
<div style="position:absolute;left:104px;top:632px;width:1px;height:30px;background:repeating-linear-gradient(#55564f 0 1px,transparent 1px 3px)"></div>
<div style="position:absolute;left:104px;top:664.27px;font:400 21.5px/30px 'Liberation Mono',monospace;color:#f8f8f2;white-space:pre;transform:scaleY(1.06);transform-origin:0 20.73px">]</div>
<div style="position:absolute;left:7px;width:60px;text-align:right;top:664.27px;font:400 21.5px/30px 'Liberation Mono',monospace;color:#90908a;white-space:pre;transform:scaleY(1.06);transform-origin:0 20.73px">35</div>
<div style="position:absolute;left:104px;top:694.27px;font:400 21.5px/30px 'Liberation Mono',monospace;color:#f8f8f2;white-space:pre;transform:scaleY(1.06);transform-origin:0 20.73px"></div>
<div style="position:absolute;left:7px;width:60px;text-align:right;top:694.27px;font:400 21.5px/30px 'Liberation Mono',monospace;color:#90908a;white-space:pre;transform:scaleY(1.06);transform-origin:0 20.73px">36</div>
<div style="position:absolute;left:104px;top:724.27px;font:400 21.5px/30px 'Liberation Mono',monospace;color:#f8f8f2;white-space:pre;transform:scaleY(1.06);transform-origin:0 20.73px"></div>
<div style="position:absolute;left:7px;width:60px;text-align:right;top:724.27px;font:400 21.5px/30px 'Liberation Mono',monospace;color:#90908a;white-space:pre;transform:scaleY(1.06);transform-origin:0 20.73px">37</div>
<div style="position:absolute;left:104px;top:754.27px;font:400 21.5px/30px 'Liberation Mono',monospace;color:#f8f8f2;white-space:pre;transform:scaleY(1.06);transform-origin:0 20.73px">sound_keywords <span style="color:#f92672">=</span> [</div>
<div style="position:absolute;left:7px;width:60px;text-align:right;top:754.27px;font:400 21.5px/30px 'Liberation Mono',monospace;color:#90908a;white-space:pre;transform:scaleY(1.06);transform-origin:0 20.73px">38</div>
<div style="position:absolute;left:104px;top:784.27px;font:400 21.5px/30px 'Liberation Mono',monospace;color:#f8f8f2;white-space:pre;transform:scaleY(1.06);transform-origin:0 20.73px">    <span style="color:#e6db74">'sound'</span>,</div>
<div style="position:absolute;left:7px;width:60px;text-align:right;top:784.27px;font:400 21.5px/30px 'Liberation Mono',monospace;color:#90908a;white-space:pre;transform:scaleY(1.06);transform-origin:0 20.73px">39</div>
<div style="position:absolute;left:104px;top:782px;width:1px;height:30px;background:repeating-linear-gradient(#55564f 0 1px,transparent 1px 3px)"></div>
<div style="position:absolute;left:104px;top:814.27px;font:400 21.5px/30px 'Liberation Mono',monospace;color:#f8f8f2;white-space:pre;transform:scaleY(1.06);transform-origin:0 20.73px">    <span style="color:#e6db74">'sounds'</span></div>
<div style="position:absolute;left:7px;width:60px;text-align:right;top:814.27px;font:400 21.5px/30px 'Liberation Mono',monospace;color:#90908a;white-space:pre;transform:scaleY(1.06);transform-origin:0 20.73px">40</div>
<div style="position:absolute;left:104px;top:812px;width:1px;height:30px;background:repeating-linear-gradient(#55564f 0 1px,transparent 1px 3px)"></div>
<div style="position:absolute;left:104px;top:844.27px;font:400 21.5px/30px 'Liberation Mono',monospace;color:#f8f8f2;white-space:pre;transform:scaleY(1.06);transform-origin:0 20.73px">]</div>
<div style="position:absolute;left:7px;width:60px;text-align:right;top:844.27px;font:400 21.5px/30px 'Liberation Mono',monospace;color:#90908a;white-space:pre;transform:scaleY(1.06);transform-origin:0 20.73px">41</div>
<div style="position:absolute;left:104px;top:874.27px;font:400 21.5px/30px 'Liberation Mono',monospace;color:#f8f8f2;white-space:pre;transform:scaleY(1.06);transform-origin:0 20.73px"></div>
<div style="position:absolute;left:7px;width:60px;text-align:right;top:874.27px;font:400 21.5px/30px 'Liberation Mono',monospace;color:#90908a;white-space:pre;transform:scaleY(1.06);transform-origin:0 20.73px">42</div>
<div style="position:absolute;left:104px;top:904.27px;font:400 21.5px/30px 'Liberation Mono',monospace;color:#f8f8f2;white-space:pre;transform:scaleY(1.06);transform-origin:0 20.73px">sensation_keywords <span style="color:#f92672">=</span> [</div>
<div style="position:absolute;left:7px;width:60px;text-align:right;top:904.27px;font:400 21.5px/30px 'Liberation Mono',monospace;color:#90908a;white-space:pre;transform:scaleY(1.06);transform-origin:0 20.73px">43</div>
<div style="position:absolute;left:104px;top:934.27px;font:400 21.5px/30px 'Liberation Mono',monospace;color:#f8f8f2;white-space:pre;transform:scaleY(1.06);transform-origin:0 20.73px">    <span style="color:#e6db74">'feels'</span>,</div>
<div style="position:absolute;left:7px;width:60px;text-align:right;top:934.27px;font:400 21.5px/30px 'Liberation Mono',monospace;color:#90908a;white-space:pre;transform:scaleY(1.06);transform-origin:0 20.73px">44</div>
<div style="position:absolute;left:104px;top:932px;width:1px;height:30px;background:repeating-linear-gradient(#55564f 0 1px,transparent 1px 3px)"></div>
<div style="position:absolute;left:104px;top:964.27px;font:400 21.5px/30px 'Liberation Mono',monospace;color:#f8f8f2;white-space:pre;transform:scaleY(1.06);transform-origin:0 20.73px">    <span style="color:#e6db74">'sensation'</span>,</div>
<div style="position:absolute;left:7px;width:60px;text-align:right;top:964.27px;font:400 21.5px/30px 'Liberation Mono',monospace;color:#90908a;white-space:pre;transform:scaleY(1.06);transform-origin:0 20.73px">45</div>
<div style="position:absolute;left:104px;top:962px;width:1px;height:30px;background:repeating-linear-gradient(#55564f 0 1px,transparent 1px 3px)"></div>
<div style="position:absolute;left:104px;top:994.27px;font:400 21.5px/30px 'Liberation Mono',monospace;color:#f8f8f2;white-space:pre;transform:scaleY(1.06);transform-origin:0 20.73px">    <span style="color:#e6db74">'feel'</span></div>
<div style="position:absolute;left:7px;width:60px;text-align:right;top:994.27px;font:400 21.5px/30px 'Liberation Mono',monospace;color:#90908a;white-space:pre;transform:scaleY(1.06);transform-origin:0 20.73px">46</div>
<div style="position:absolute;left:104px;top:992px;width:1px;height:30px;background:repeating-linear-gradient(#55564f 0 1px,transparent 1px 3px)"></div>
<div style="position:absolute;left:104px;top:1024.27px;font:400 21.5px/30px 'Liberation Mono',monospace;color:#f8f8f2;white-space:pre;transform:scaleY(1.06);transform-origin:0 20.73px"></div>
<div style="position:absolute;left:7px;width:60px;text-align:right;top:1024.27px;font:400 21.5px/30px 'Liberation Mono',monospace;color:#90908a;white-space:pre;transform:scaleY(1.06);transform-origin:0 20.73px">47</div>
<div style="position:absolute;left:104px;top:1054.27px;font:400 21.5px/30px 'Liberation Mono',monospace;color:#f8f8f2;white-space:pre;transform:scaleY(1.06);transform-origin:0 20.73px">]</div>
<div style="position:absolute;left:7px;width:60px;text-align:right;top:1054.27px;font:400 21.5px/30px 'Liberation Mono',monospace;color:#90908a;white-space:pre;transform:scaleY(1.06);transform-origin:0 20.73px">48</div>
<div style="position:absolute;left:104px;top:1084.27px;font:400 21.5px/30px 'Liberation Mono',monospace;color:#f8f8f2;white-space:pre;transform:scaleY(1.06);transform-origin:0 20.73px"></div>
<div style="position:absolute;left:7px;width:60px;text-align:right;top:1084.27px;font:400 21.5px/30px 'Liberation Mono',monospace;color:#90908a;white-space:pre;transform:scaleY(1.06);transform-origin:0 20.73px">49</div>
</div>
<svg style="position:absolute;left:2400px;top:252px" width="128" height="520" viewBox="2400 252 128 520"><rect x="2404.00" y="254.4" width="17.20" height="1.1" fill="#6b6755" opacity="0.65"/><rect x="2404.00" y="256.4" width="18.92" height="1.1" fill="#6b6755" opacity="0.65"/><rect x="2404.00" y="260.4" width="3.44" height="1.1" fill="#d4245f" opacity="0.65"/><rect x="2408.30" y="260.4" width="6.88" height="1.1" fill="#c9c9c3" opacity="0.5"/><rect x="2416.04" y="260.4" width="5.16" height="1.1" fill="#d4245f" opacity="0.65"/><rect x="2422.06" y="260.4" width="10.32" height="1.1" fill="#c9c9c3" opacity="0.5"/><rect x="2404.00" y="266.4" width="12.04" height="1.1" fill="#c9c9c3" opacity="0.5"/><rect x="2416.90" y="266.4" width="0.86" height="1.1" fill="#d4245f" opacity="0.65"/><rect x="2418.62" y="266.4" width="0.86" height="1.1" fill="#c9c9c3" opacity="0.5"/><rect x="2407.44" y="268.4" width="6.02" height="1.1" fill="#c9bf63" opacity="0.65"/><rect x="2413.46" y="268.4" width="0.86" height="1.1" fill="#c9c9c3" opacity="0.5"/><rect x="2407.44" y="270.4" width="11.18" height="1.1" fill="#c9bf63" opacity="0.65"/><rect x="2418.62" y="270.4" width="0.86" height="1.1" fill="#c9c9c3" opacity="0.5"/><rect x="2407.44" y="272.4" width="9.46" height="1.1" fill="#c9bf63" opacity="0.65"/><rect x="2416.90" y="272.4" width="0.86" height="1.1" fill="#c9c9c3" opacity="0.5"/><rect x="2407.44" y="274.4" width="7.74" height="1.1" fill="#c9bf63" opacity="0.65"/><rect x="2415.18" y="274.4" width="0.86" height="1.1" fill="#c9c9c3" opacity="0.5"/><rect x="2404.00" y="276.4" width="0.86" height="1.1" fill="#c9c9c3" opacity="0.5"/><rect x="2404.00" y="280.4" width="15.48" height="1.1" fill="#c9c9c3" opacity="0.5"/><rect x="2420.34" y="280.4" width="0.86" height="1.1" fill="#d4245f" opacity="0.65"/><rect x="2422.06" y="280.4" width="0.86" height="1.1" fill="#c9c9c3" opacity="0.5"/><rect x="2407.44" y="282.4" width="6.02" height="1.1" fill="#c9bf63" opacity="0.65"/><rect x="2413.46" y="282.4" width="0.86" height="1.1" fill="#c9c9c3" opacity="0.5"/><rect x="2407.44" y="284.4" width="5.16" height="1.1" fill="#c9bf63" opacity="0.65"/><rect x="2412.60" y="284.4" width="0.86" height="1.1" fill="#c9c9c3" opacity="0.5"/><rect x="2407.44" y="286.4" width="6.02" height="1.1" fill="#c9bf63" opacity="0.65"/><rect x="2413.46" y="286.4" width="0.86" height="1.1" fill="#c9c9c3" opacity="0.5"/><rect x="2407.44" y="288.4" width="6.88" height="1.1" fill="#c9bf63" opacity="0.65"/><rect x="2414.32" y="288.4" width="0.86" height="1.1" fill="#c9c9c3" opacity="0.5"/><rect x="2407.44" y="290.4" width="6.02" height="1.1" fill="#c9bf63" opacity="0.65"/><rect x="2413.46" y="290.4" width="0.86" height="1.1" fill="#c9c9c3" opacity="0.5"/><rect x="2407.44" y="292.4" width="9.46" height="1.1" fill="#c9bf63" opacity="0.65"/><rect x="2416.90" y="292.4" width="0.86" height="1.1" fill="#c9c9c3" opacity="0.5"/><rect x="2407.44" y="294.4" width="10.32" height="1.1" fill="#c9bf63" opacity="0.65"/><rect x="2417.76" y="294.4" width="0.86" height="1.1" fill="#c9c9c3" opacity="0.5"/><rect x="2404.00" y="298.4" width="0.86" height="1.1" fill="#c9c9c3" opacity="0.5"/><rect x="2404.00" y="302.4" width="16.34" height="1.1" fill="#c9c9c3" opacity="0.5"/><rect x="2421.20" y="302.4" width="0.86" height="1.1" fill="#d4245f" opacity="0.65"/><rect x="2422.92" y="302.4" width="0.86" height="1.1" fill="#c9c9c3" opacity="0.5"/><rect x="2407.44" y="304.4" width="6.88" height="1.1" fill="#c9bf63" opacity="0.65"/><rect x="2414.32" y="304.4" width="0.86" height="1.1" fill="#c9c9c3" opacity="0.5"/><rect x="2407.44" y="306.4" width="14.62" height="1.1" fill="#c9bf63" opacity="0.65"/><rect x="2422.06" y="306.4" width="0.86" height="1.1" fill="#c9c9c3" opacity="0.5"/><rect x="2407.44" y="308.4" width="11.18" height="1.1" fill="#c9bf63" opacity="0.65"/><rect x="2418.62" y="308.4" width="0.86" height="1.1" fill="#c9c9c3" opacity="0.5"/><rect x="2404.00" y="310.4" width="0.86" height="1.1" fill="#c9c9c3" opacity="0.5"/><rect x="2404.00" y="314.4" width="12.04" height="1.1" fill="#c9c9c3" opacity="0.5"/><rect x="2416.90" y="314.4" width="0.86" height="1.1" fill="#d4245f" opacity="0.65"/><rect x="2418.62" y="314.4" width="0.86" height="1.1" fill="#c9c9c3" opacity="0.5"/><rect x="2407.44" y="316.4" width="6.02" height="1.1" fill="#c9bf63" opacity="0.65"/><rect x="2413.46" y="316.4" width="0.86" height="1.1" fill="#c9c9c3" opacity="0.5"/><rect x="2407.44" y="318.4" width="6.02" height="1.1" fill="#c9bf63" opacity="0.65"/><rect x="2413.46" y="318.4" width="0.86" height="1.1" fill="#c9c9c3" opacity="0.5"/><rect x="2407.44" y="320.4" width="6.88" height="1.1" fill="#c9bf63" opacity="0.65"/><rect x="2414.32" y="320.4" width="0.86" height="1.1" fill="#c9c9c3" opacity="0.5"/><rect x="2404.00" y="322.4" width="0.86" height="1.1" fill="#c9c9c3" opacity="0.5"/><rect x="2404.00" y="328.4" width="12.04" height="1.1" fill="#c9c9c3" opacity="0.5"/><rect x="2416.90" y="328.4" width="0.86" height="1.1" fill="#d4245f" opacity="0.65"/><rect x="2418.62" y="328.4" width="0.86" height="1.1" fill="#c9c9c3" opacity="0.5"/><rect x="2407.44" y="330.4" width="6.02" height="1.1" fill="#c9bf63" opacity="0.65"/><rect x="2413.46" y="330.4" width="0.86" height="1.1" fill="#c9c9c3" opacity="0.5"/><rect x="2407.44" y="332.4" width="6.88" height="1.1" fill="#c9bf63" opacity="0.65"/><rect x="2414.32" y="332.4" width="0.86" height="1.1" fill="#c9c9c3" opacity="0.5"/><rect x="2404.00" y="334.4" width="0.86" height="1.1" fill="#c9c9c3" opacity="0.5"/><rect x="2404.00" y="338.4" width="15.48" height="1.1" fill="#c9c9c3" opacity="0.5"/><rect x="2420.34" y="338.4" width="0.86" height="1.1" fill="#d4245f" opacity="0.65"/><rect x="2422.06" y="338.4" width="0.86" height="1.1" fill="#c9c9c3" opacity="0.5"/><rect x="2407.44" y="340.4" width="6.02" height="1.1" fill="#c9bf63" opacity="0.65"/><rect x="2413.46" y="340.4" width="0.86" height="1.1" fill="#c9c9c3" opacity="0.5"/><rect x="2407.44" y="342.4" width="9.46" height="1.1" fill="#c9bf63" opacity="0.65"/><rect x="2416.90" y="342.4" width="0.86" height="1.1" fill="#c9c9c3" opacity="0.5"/><rect x="2407.44" y="344.4" width="5.16" height="1.1" fill="#c9bf63" opacity="0.65"/><rect x="2412.60" y="344.4" width="0.86" height="1.1" fill="#c9c9c3" opacity="0.5"/><rect x="2404.00" y="348.4" width="0.86" height="1.1" fill="#c9c9c3" opacity="0.5"/><rect x="2404.00" y="352.4" width="13.76" height="1.1" fill="#c9c9c3" opacity="0.5"/><rect x="2418.62" y="352.4" width="0.86" height="1.1" fill="#d4245f" opacity="0.65"/><rect x="2420.34" y="352.4" width="0.86" height="1.1" fill="#c9c9c3" opacity="0.5"/><rect x="2407.44" y="354.4" width="4.30" height="1.1" fill="#c9bf63" opacity="0.65"/><rect x="2411.74" y="354.4" width="0.86" height="1.1" fill="#c9c9c3" opacity="0.5"/><rect x="2407.44" y="356.4" width="6.88" height="1.1" fill="#c9bf63" opacity="0.65"/><rect x="2414.32" y="356.4" width="0.86" height="1.1" fill="#c9c9c3" opacity="0.5"/><rect x="2407.44" y="358.4" width="9.46" height="1.1" fill="#c9bf63" opacity="0.65"/><rect x="2416.90" y="358.4" width="0.86" height="1.1" fill="#c9c9c3" opacity="0.5"/><rect x="2404.00" y="360.4" width="0.86" height="1.1" fill="#c9c9c3" opacity="0.5"/><rect x="2404.00" y="368.4" width="11.18" height="1.1" fill="#c9c9c3" opacity="0.5"/><rect x="2416.04" y="368.4" width="0.86" height="1.1" fill="#d4245f" opacity="0.65"/><rect x="2417.76" y="368.4" width="0.86" height="1.1" fill="#c9c9c3" opacity="0.5"/><rect x="2407.44" y="370.4" width="5.16" height="1.1" fill="#c9bf63" opacity="0.65"/><rect x="2412.60" y="370.4" width="0.86" height="1.1" fill="#c9c9c3" opacity="0.5"/><rect x="2407.44" y="372.4" width="6.88" height="1.1" fill="#c9bf63" opacity="0.65"/><rect x="2414.32" y="372.4" width="0.86" height="1.1" fill="#c9c9c3" opacity="0.5"/><rect x="2407.44" y="374.4" width="6.02" height="1.1" fill="#c9bf63" opacity="0.65"/><rect x="2413.46" y="374.4" width="0.86" height="1.1" fill="#c9c9c3" opacity="0.5"/><rect x="2407.44" y="376.4" width="4.30" height="1.1" fill="#c9bf63" opacity="0.65"/><rect x="2411.74" y="376.4" width="0.86" height="1.1" fill="#c9c9c3" opacity="0.5"/><rect x="2404.00" y="378.4" width="0.86" height="1.1" fill="#c9c9c3" opacity="0.5"/><rect x="2404.00" y="382.4" width="10.32" height="1.1" fill="#c9c9c3" opacity="0.5"/><rect x="2415.18" y="382.4" width="0.86" height="1.1" fill="#d4245f" opacity="0.65"/><rect x="2416.90" y="382.4" width="0.86" height="1.1" fill="#c9c9c3" opacity="0.5"/><rect x="2407.44" y="384.4" width="4.30" height="1.1" fill="#c9bf63" opacity="0.65"/><rect x="2411.74" y="384.4" width="0.86" height="1.1" fill="#c9c9c3" opacity="0.5"/><rect x="2407.44" y="386.4" width="5.16" height="1.1" fill="#c9bf63" opacity="0.65"/><rect x="2412.60" y="386.4" width="0.86" height="1.1" fill="#c9c9c3" opacity="0.5"/><rect x="2407.44" y="388.4" width="8.60" height="1.1" fill="#c9bf63" opacity="0.65"/><rect x="2416.04" y="388.4" width="0.86" height="1.1" fill="#c9c9c3" opacity="0.5"/><rect x="2404.00" y="390.4" width="0.86" height="1.1" fill="#c9c9c3" opacity="0.5"/><rect x="2404.00" y="394.4" width="12.04" height="1.1" fill="#c9c9c3" opacity="0.5"/><rect x="2416.90" y="394.4" width="0.86" height="1.1" fill="#d4245f" opacity="0.65"/><rect x="2418.62" y="394.4" width="0.86" height="1.1" fill="#c9c9c3" opacity="0.5"/><rect x="2407.44" y="396.4" width="5.16" height="1.1" fill="#c9bf63" opacity="0.65"/><rect x="2412.60" y="396.4" width="0.86" height="1.1" fill="#c9c9c3" opacity="0.5"/><rect x="2407.44" y="398.4" width="12.04" height="1.1" fill="#c9bf63" opacity="0.65"/><rect x="2419.48" y="398.4" width="0.86" height="1.1" fill="#c9c9c3" opacity="0.5"/><rect x="2407.44" y="400.4" width="9.46" height="1.1" fill="#c9bf63" opacity="0.65"/><rect x="2416.90" y="400.4" width="0.86" height="1.1" fill="#c9c9c3" opacity="0.5"/><rect x="2407.44" y="402.4" width="6.88" height="1.1" fill="#c9bf63" opacity="0.65"/><rect x="2414.32" y="402.4" width="0.86" height="1.1" fill="#c9c9c3" opacity="0.5"/><rect x="2404.00" y="404.4" width="0.86" height="1.1" fill="#c9c9c3" opacity="0.5"/><rect x="2404.00" y="410.4" width="12.04" height="1.1" fill="#c9c9c3" opacity="0.5"/><rect x="2416.90" y="410.4" width="0.86" height="1.1" fill="#d4245f" opacity="0.65"/><rect x="2418.62" y="410.4" width="0.86" height="1.1" fill="#c9c9c3" opacity="0.5"/><rect x="2407.44" y="412.4" width="6.02" height="1.1" fill="#c9bf63" opacity="0.65"/><rect x="2413.46" y="412.4" width="0.86" height="1.1" fill="#c9c9c3" opacity="0.5"/><rect x="2407.44" y="414.4" width="6.88" height="1.1" fill="#c9bf63" opacity="0.65"/><rect x="2414.32" y="414.4" width="0.86" height="1.1" fill="#c9c9c3" opacity="0.5"/><rect x="2407.44" y="416.4" width="6.02" height="1.1" fill="#c9bf63" opacity="0.65"/><rect x="2413.46" y="416.4" width="0.86" height="1.1" fill="#c9c9c3" opacity="0.5"/><rect x="2407.44" y="418.4" width="6.02" height="1.1" fill="#c9bf63" opacity="0.65"/><rect x="2413.46" y="418.4" width="0.86" height="1.1" fill="#c9c9c3" opacity="0.5"/><rect x="2407.44" y="420.4" width="8.60" height="1.1" fill="#c9bf63" opacity="0.65"/><rect x="2416.04" y="420.4" width="0.86" height="1.1" fill="#c9c9c3" opacity="0.5"/><rect x="2407.44" y="422.4" width="8.60" height="1.1" fill="#c9bf63" opacity="0.65"/><rect x="2416.04" y="422.4" width="0.86" height="1.1" fill="#c9c9c3" opacity="0.5"/><rect x="2404.00" y="424.4" width="0.86" height="1.1" fill="#c9c9c3" opacity="0.5"/><rect x="2404.00" y="428.4" width="9.46" height="1.1" fill="#c9c9c3" opacity="0.5"/><rect x="2414.32" y="428.4" width="0.86" height="1.1" fill="#d4245f" opacity="0.65"/><rect x="2416.04" y="428.4" width="0.86" height="1.1" fill="#c9c9c3" opacity="0.5"/><rect x="2407.44" y="430.4" width="3.44" height="1.1" fill="#c9bf63" opacity="0.65"/><rect x="2410.88" y="430.4" width="0.86" height="1.1" fill="#c9c9c3" opacity="0.5"/><rect x="2407.44" y="432.4" width="5.16" height="1.1" fill="#c9bf63" opacity="0.65"/><rect x="2412.60" y="432.4" width="0.86" height="1.1" fill="#c9c9c3" opacity="0.5"/><rect x="2407.44" y="434.4" width="5.16" height="1.1" fill="#c9bf63" opacity="0.65"/><rect x="2412.60" y="434.4" width="0.86" height="1.1" fill="#c9c9c3" opacity="0.5"/><rect x="2407.44" y="436.4" width="10.32" height="1.1" fill="#c9bf63" opacity="0.65"/><rect x="2417.76" y="436.4" width="0.86" height="1.1" fill="#c9c9c3" opacity="0.5"/><rect x="2407.44" y="438.4" width="10.32" height="1.1" fill="#c9bf63" opacity="0.65"/><rect x="2417.76" y="438.4" width="0.86" height="1.1" fill="#c9c9c3" opacity="0.5"/><rect x="2407.44" y="440.4" width="7.74" height="1.1" fill="#c9bf63" opacity="0.65"/><rect x="2415.18" y="440.4" width="0.86" height="1.1" fill="#c9c9c3" opacity="0.5"/><rect x="2407.44" y="442.4" width="5.16" height="1.1" fill="#c9bf63" opacity="0.65"/><rect x="2412.60" y="442.4" width="0.86" height="1.1" fill="#c9c9c3" opacity="0.5"/><rect x="2407.44" y="444.4" width="8.60" height="1.1" fill="#c9bf63" opacity="0.65"/><rect x="2416.04" y="444.4" width="0.86" height="1.1" fill="#c9c9c3" opacity="0.5"/><rect x="2407.44" y="446.4" width="20.64" height="1.1" fill="#c9bf63" opacity="0.65"/><rect x="2428.08" y="446.4" width="0.86" height="1.1" fill="#c9c9c3" opacity="0.5"/><rect x="2404.00" y="448.4" width="0.86" height="1.1" fill="#c9c9c3" opacity="0.5"/><rect x="2404.00" y="454.4" width="10.32" height="1.1" fill="#c9c9c3" opacity="0.5"/><rect x="2415.18" y="454.4" width="0.86" height="1.1" fill="#d4245f" opacity="0.65"/><rect x="2416.90" y="454.4" width="0.86" height="1.1" fill="#c9c9c3" opacity="0.5"/><rect x="2407.44" y="456.4" width="4.30" height="1.1" fill="#c9bf63" opacity="0.65"/><rect x="2411.74" y="456.4" width="0.86" height="1.1" fill="#c9c9c3" opacity="0.5"/><rect x="2407.44" y="458.4" width="4.30" height="1.1" fill="#c9bf63" opacity="0.65"/><rect x="2411.74" y="458.4" width="0.86" height="1.1" fill="#c9c9c3" opacity="0.5"/><rect x="2407.44" y="460.4" width="6.02" height="1.1" fill="#c9bf63" opacity="0.65"/><rect x="2413.46" y="460.4" width="0.86" height="1.1" fill="#c9c9c3" opacity="0.5"/><rect x="2407.44" y="462.4" width="3.44" height="1.1" fill="#c9bf63" opacity="0.65"/><rect x="2410.88" y="462.4" width="0.86" height="1.1" fill="#c9c9c3" opacity="0.5"/><rect x="2404.00" y="464.4" width="0.86" height="1.1" fill="#c9c9c3" opacity="0.5"/><rect x="2404.00" y="470.4" width="11.18" height="1.1" fill="#c9c9c3" opacity="0.5"/><rect x="2416.04" y="470.4" width="0.86" height="1.1" fill="#d4245f" opacity="0.65"/><rect x="2417.76" y="470.4" width="0.86" height="1.1" fill="#c9c9c3" opacity="0.5"/><rect x="2407.44" y="472.4" width="6.88" height="1.1" fill="#c9bf63" opacity="0.65"/><rect x="2414.32" y="472.4" width="0.86" height="1.1" fill="#c9c9c3" opacity="0.5"/><rect x="2407.44" y="474.4" width="5.16" height="1.1" fill="#c9bf63" opacity="0.65"/><rect x="2412.60" y="474.4" width="0.86" height="1.1" fill="#c9c9c3" opacity="0.5"/><rect x="2407.44" y="476.4" width="5.16" height="1.1" fill="#c9bf63" opacity="0.65"/><rect x="2412.60" y="476.4" width="0.86" height="1.1" fill="#c9c9c3" opacity="0.5"/><rect x="2407.44" y="478.4" width="5.16" height="1.1" fill="#c9bf63" opacity="0.65"/><rect x="2412.60" y="478.4" width="0.86" height="1.1" fill="#c9c9c3" opacity="0.5"/><rect x="2407.44" y="480.4" width="7.74" height="1.1" fill="#c9bf63" opacity="0.65"/><rect x="2415.18" y="480.4" width="0.86" height="1.1" fill="#c9c9c3" opacity="0.5"/><rect x="2407.44" y="482.4" width="6.02" height="1.1" fill="#c9bf63" opacity="0.65"/><rect x="2413.46" y="482.4" width="0.86" height="1.1" fill="#c9c9c3" opacity="0.5"/><rect x="2407.44" y="484.4" width="7.74" height="1.1" fill="#c9bf63" opacity="0.65"/><rect x="2415.18" y="484.4" width="0.86" height="1.1" fill="#c9c9c3" opacity="0.5"/><rect x="2404.00" y="486.4" width="0.86" height="1.1" fill="#c9c9c3" opacity="0.5"/><rect x="2404.00" y="490.4" width="13.76" height="1.1" fill="#c9c9c3" opacity="0.5"/><rect x="2418.62" y="490.4" width="0.86" height="1.1" fill="#d4245f" opacity="0.65"/><rect x="2420.34" y="490.4" width="0.86" height="1.1" fill="#c9c9c3" opacity="0.5"/><rect x="2407.44" y="492.4" width="4.30" height="1.1" fill="#c9bf63" opacity="0.65"/><rect x="2411.74" y="492.4" width="0.86" height="1.1" fill="#c9c9c3" opacity="0.5"/><rect x="2407.44" y="494.4" width="6.88" height="1.1" fill="#c9bf63" opacity="0.65"/><rect x="2414.32" y="494.4" width="0.86" height="1.1" fill="#c9c9c3" opacity="0.5"/><rect x="2407.44" y="496.4" width="6.02" height="1.1" fill="#c9bf63" opacity="0.65"/><rect x="2413.46" y="496.4" width="0.86" height="1.1" fill="#c9c9c3" opacity="0.5"/><rect x="2404.00" y="498.4" width="0.86" height="1.1" fill="#c9c9c3" opacity="0.5"/><rect x="2404.00" y="504.4" width="11.18" height="1.1" fill="#c9c9c3" opacity="0.5"/><rect x="2416.04" y="504.4" width="0.86" height="1.1" fill="#d4245f" opacity="0.65"/><rect x="2417.76" y="504.4" width="0.86" height="1.1" fill="#c9c9c3" opacity="0.5"/><rect x="2407.44" y="506.4" width="5.16" height="1.1" fill="#c9bf63" opacity="0.65"/><rect x="2412.60" y="506.4" width="0.86" height="1.1" fill="#c9c9c3" opacity="0.5"/><rect x="2407.44" y="508.4" width="14.62" height="1.1" fill="#c9bf63" opacity="0.65"/><rect x="2422.06" y="508.4" width="0.86" height="1.1" fill="#c9c9c3" opacity="0.5"/><rect x="2407.44" y="510.4" width="12.04" height="1.1" fill="#c9bf63" opacity="0.65"/><rect x="2419.48" y="510.4" width="0.86" height="1.1" fill="#c9c9c3" opacity="0.5"/><rect x="2407.44" y="512.4" width="15.48" height="1.1" fill="#c9bf63" opacity="0.65"/><rect x="2422.92" y="512.4" width="0.86" height="1.1" fill="#c9c9c3" opacity="0.5"/><rect x="2407.44" y="514.4" width="8.60" height="1.1" fill="#c9bf63" opacity="0.65"/><rect x="2416.04" y="514.4" width="0.86" height="1.1" fill="#c9c9c3" opacity="0.5"/><rect x="2407.44" y="516.4" width="11.18" height="1.1" fill="#c9bf63" opacity="0.65"/><rect x="2418.62" y="516.4" width="0.86" height="1.1" fill="#c9c9c3" opacity="0.5"/><rect x="2407.44" y="518.4" width="5.16" height="1.1" fill="#c9bf63" opacity="0.65"/><rect x="2412.60" y="518.4" width="0.86" height="1.1" fill="#c9c9c3" opacity="0.5"/><rect x="2404.00" y="520.4" width="0.86" height="1.1" fill="#c9c9c3" opacity="0.5"/><rect x="2404.00" y="530.4" width="67.08" height="1.1" fill="#6b6755" opacity="0.65"/><rect x="2404.00" y="532.4" width="29.24" height="1.1" fill="#6b6755" opacity="0.65"/><rect x="2404.00" y="534.4" width="14.62" height="1.1" fill="#c9c9c3" opacity="0.5"/><rect x="2419.48" y="534.4" width="0.86" height="1.1" fill="#d4245f" opacity="0.65"/><rect x="2421.20" y="534.4" width="15.48" height="1.1" fill="#c9bf63" opacity="0.65"/><rect x="2404.00" y="536.4" width="36.98" height="1.1" fill="#6b6755" opacity="0.65"/><rect x="2404.00" y="542.4" width="25.80" height="1.1" fill="#6b6755" opacity="0.65"/><rect x="2404.00" y="544.4" width="49.02" height="1.1" fill="#6b6755" opacity="0.65"/><rect x="2422.92" y="546.4" width="45.58" height="1.1" fill="#6b6755" opacity="0.65"/><rect x="2422.92" y="548.4" width="23.22" height="1.1" fill="#6b6755" opacity="0.65"/><rect x="2404.00" y="554.4" width="34.40" height="1.1" fill="#6b6755" opacity="0.65"/><rect x="2404.00" y="556.4" width="9.46" height="1.1" fill="#c9c9c3" opacity="0.5"/><rect x="2414.32" y="556.4" width="0.86" height="1.1" fill="#d4245f" opacity="0.65"/><rect x="2416.04" y="556.4" width="10.32" height="1.1" fill="#c9c9c3" opacity="0.5"/><rect x="2426.36" y="556.4" width="9.46" height="1.1" fill="#c9bf63" opacity="0.65"/><rect x="2435.82" y="556.4" width="1.72" height="1.1" fill="#c9c9c3" opacity="0.5"/><rect x="2407.44" y="558.4" width="6.88" height="1.1" fill="#c9c9c3" opacity="0.5"/><rect x="2414.32" y="558.4" width="9.46" height="1.1" fill="#c9bf63" opacity="0.65"/><rect x="2423.78" y="558.4" width="1.72" height="1.1" fill="#c9c9c3" opacity="0.5"/><rect x="2407.44" y="560.4" width="9.46" height="1.1" fill="#c9c9c3" opacity="0.5"/><rect x="2416.90" y="560.4" width="10.32" height="1.1" fill="#c9bf63" opacity="0.65"/><rect x="2427.22" y="560.4" width="1.72" height="1.1" fill="#c9c9c3" opacity="0.5"/><rect x="2407.44" y="562.4" width="6.02" height="1.1" fill="#c9c9c3" opacity="0.5"/><rect x="2404.00" y="566.4" width="9.46" height="1.1" fill="#c9c9c3" opacity="0.5"/><rect x="2414.32" y="566.4" width="0.86" height="1.1" fill="#d4245f" opacity="0.65"/><rect x="2416.04" y="566.4" width="10.32" height="1.1" fill="#c9c9c3" opacity="0.5"/><rect x="2426.36" y="566.4" width="9.46" height="1.1" fill="#c9bf63" opacity="0.65"/><rect x="2435.82" y="566.4" width="1.72" height="1.1" fill="#c9c9c3" opacity="0.5"/><rect x="2407.44" y="568.4" width="6.88" height="1.1" fill="#c9c9c3" opacity="0.5"/><rect x="2414.32" y="568.4" width="9.46" height="1.1" fill="#c9bf63" opacity="0.65"/><rect x="2423.78" y="568.4" width="1.72" height="1.1" fill="#c9c9c3" opacity="0.5"/><rect x="2407.44" y="570.4" width="9.46" height="1.1" fill="#c9c9c3" opacity="0.5"/><rect x="2416.90" y="570.4" width="10.32" height="1.1" fill="#c9bf63" opacity="0.65"/><rect x="2427.22" y="570.4" width="1.72" height="1.1" fill="#c9c9c3" opacity="0.5"/><rect x="2407.44" y="572.4" width="6.02" height="1.1" fill="#c9c9c3" opacity="0.5"/><rect x="2404.00" y="576.4" width="15.48" height="1.1" fill="#c9c9c3" opacity="0.5"/><rect x="2420.34" y="576.4" width="0.86" height="1.1" fill="#d4245f" opacity="0.65"/><rect x="2422.06" y="576.4" width="10.32" height="1.1" fill="#c9c9c3" opacity="0.5"/><rect x="2432.38" y="576.4" width="11.18" height="1.1" fill="#c9bf63" opacity="0.65"/><rect x="2443.56" y="576.4" width="1.72" height="1.1" fill="#c9c9c3" opacity="0.5"/><rect x="2407.44" y="578.4" width="6.88" height="1.1" fill="#c9c9c3" opacity="0.5"/><rect x="2414.32" y="578.4" width="10.32" height="1.1" fill="#c9bf63" opacity="0.65"/><rect x="2424.64" y="578.4" width="1.72" height="1.1" fill="#c9c9c3" opacity="0.5"/><rect x="2407.44" y="580.4" width="6.02" height="1.1" fill="#c9c9c3" opacity="0.5"/><rect x="2404.00" y="586.4" width="10.32" height="1.1" fill="#c9c9c3" opacity="0.5"/><rect x="2415.18" y="586.4" width="0.86" height="1.1" fill="#d4245f" opacity="0.65"/><rect x="2416.90" y="586.4" width="10.32" height="1.1" fill="#c9c9c3" opacity="0.5"/><rect x="2427.22" y="586.4" width="9.46" height="1.1" fill="#c9bf63" opacity="0.65"/><rect x="2436.68" y="586.4" width="1.72" height="1.1" fill="#c9c9c3" opacity="0.5"/><rect x="2407.44" y="588.4" width="6.88" height="1.1" fill="#c9c9c3" opacity="0.5"/><rect x="2414.32" y="588.4" width="10.32" height="1.1" fill="#c9bf63" opacity="0.65"/><rect x="2424.64" y="588.4" width="1.72" height="1.1" fill="#c9c9c3" opacity="0.5"/><rect x="2407.44" y="590.4" width="6.02" height="1.1" fill="#c9c9c3" opacity="0.5"/><rect x="2404.00" y="594.4" width="18.06" height="1.1" fill="#c9c9c3" opacity="0.5"/><rect x="2422.92" y="594.4" width="0.86" height="1.1" fill="#d4245f" opacity="0.65"/><rect x="2424.64" y="594.4" width="10.32" height="1.1" fill="#c9c9c3" opacity="0.5"/><rect x="2434.96" y="594.4" width="16.34" height="1.1" fill="#c9bf63" opacity="0.65"/><rect x="2451.30" y="594.4" width="1.72" height="1.1" fill="#c9c9c3" opacity="0.5"/><rect x="2407.44" y="596.4" width="6.88" height="1.1" fill="#c9c9c3" opacity="0.5"/><rect x="2414.32" y="596.4" width="12.90" height="1.1" fill="#c9bf63" opacity="0.65"/><rect x="2427.22" y="596.4" width="1.72" height="1.1" fill="#c9c9c3" opacity="0.5"/><rect x="2407.44" y="598.4" width="6.88" height="1.1" fill="#c9c9c3" opacity="0.5"/><rect x="2414.32" y="598.4" width="12.90" height="1.1" fill="#c9bf63" opacity="0.65"/><rect x="2427.22" y="598.4" width="1.72" height="1.1" fill="#c9c9c3" opacity="0.5"/><rect x="2407.44" y="600.4" width="9.46" height="1.1" fill="#c9c9c3" opacity="0.5"/><rect x="2416.90" y="600.4" width="7.74" height="1.1" fill="#c9bf63" opacity="0.65"/><rect x="2424.64" y="600.4" width="1.72" height="1.1" fill="#c9c9c3" opacity="0.5"/><rect x="2407.44" y="602.4" width="6.02" height="1.1" fill="#c9c9c3" opacity="0.5"/><rect x="2404.00" y="604.4" width="18.06" height="1.1" fill="#c9c9c3" opacity="0.5"/><rect x="2422.92" y="604.4" width="0.86" height="1.1" fill="#d4245f" opacity="0.65"/><rect x="2424.64" y="604.4" width="10.32" height="1.1" fill="#c9c9c3" opacity="0.5"/><rect x="2434.96" y="604.4" width="16.34" height="1.1" fill="#c9bf63" opacity="0.65"/><rect x="2451.30" y="604.4" width="1.72" height="1.1" fill="#c9c9c3" opacity="0.5"/><rect x="2407.44" y="606.4" width="6.88" height="1.1" fill="#c9c9c3" opacity="0.5"/><rect x="2414.32" y="606.4" width="8.60" height="1.1" fill="#c9bf63" opacity="0.65"/><rect x="2422.92" y="606.4" width="1.72" height="1.1" fill="#c9c9c3" opacity="0.5"/><rect x="2407.44" y="608.4" width="6.02" height="1.1" fill="#c9c9c3" opacity="0.5"/><rect x="2404.00" y="612.4" width="16.34" height="1.1" fill="#c9c9c3" opacity="0.5"/><rect x="2421.20" y="612.4" width="0.86" height="1.1" fill="#d4245f" opacity="0.65"/><rect x="2422.92" y="612.4" width="10.32" height="1.1" fill="#c9c9c3" opacity="0.5"/><rect x="2433.24" y="612.4" width="14.62" height="1.1" fill="#c9bf63" opacity="0.65"/><rect x="2447.86" y="612.4" width="1.72" height="1.1" fill="#c9c9c3" opacity="0.5"/><rect x="2407.44" y="614.4" width="6.88" height="1.1" fill="#c9c9c3" opacity="0.5"/><rect x="2414.32" y="614.4" width="9.46" height="1.1" fill="#c9bf63" opacity="0.65"/><rect x="2423.78" y="614.4" width="1.72" height="1.1" fill="#c9c9c3" opacity="0.5"/><rect x="2407.44" y="616.4" width="6.02" height="1.1" fill="#c9c9c3" opacity="0.5"/><rect x="2404.00" y="620.4" width="18.06" height="1.1" fill="#c9c9c3" opacity="0.5"/><rect x="2422.92" y="620.4" width="0.86" height="1.1" fill="#d4245f" opacity="0.65"/><rect x="2424.64" y="620.4" width="10.32" height="1.1" fill="#c9c9c3" opacity="0.5"/><rect x="2434.96" y="620.4" width="16.34" height="1.1" fill="#c9bf63" opacity="0.65"/><rect x="2451.30" y="620.4" width="1.72" height="1.1" fill="#c9c9c3" opacity="0.5"/><rect x="2407.44" y="622.4" width="6.88" height="1.1" fill="#c9c9c3" opacity="0.5"/><rect x="2414.32" y="622.4" width="14.62" height="1.1" fill="#c9bf63" opacity="0.65"/><rect x="2428.94" y="622.4" width="1.72" height="1.1" fill="#c9c9c3" opacity="0.5"/><rect x="2407.44" y="624.4" width="6.88" height="1.1" fill="#c9c9c3" opacity="0.5"/><rect x="2414.32" y="624.4" width="9.46" height="1.1" fill="#c9bf63" opacity="0.65"/><rect x="2423.78" y="624.4" width="1.72" height="1.1" fill="#c9c9c3" opacity="0.5"/><rect x="2407.44" y="626.4" width="9.46" height="1.1" fill="#c9c9c3" opacity="0.5"/><rect x="2416.90" y="626.4" width="7.74" height="1.1" fill="#c9bf63" opacity="0.65"/><rect x="2424.64" y="626.4" width="1.72" height="1.1" fill="#c9c9c3" opacity="0.5"/><rect x="2407.44" y="628.4" width="6.02" height="1.1" fill="#c9c9c3" opacity="0.5"/><rect x="2404.00" y="632.4" width="18.06" height="1.1" fill="#c9c9c3" opacity="0.5"/><rect x="2422.92" y="632.4" width="0.86" height="1.1" fill="#d4245f" opacity="0.65"/><rect x="2424.64" y="632.4" width="10.32" height="1.1" fill="#c9c9c3" opacity="0.5"/><rect x="2434.96" y="632.4" width="16.34" height="1.1" fill="#c9bf63" opacity="0.65"/><rect x="2451.30" y="632.4" width="1.72" height="1.1" fill="#c9c9c3" opacity="0.5"/><rect x="2407.44" y="634.4" width="6.88" height="1.1" fill="#c9c9c3" opacity="0.5"/><rect x="2414.32" y="634.4" width="14.62" height="1.1" fill="#c9bf63" opacity="0.65"/><rect x="2428.94" y="634.4" width="1.72" height="1.1" fill="#c9c9c3" opacity="0.5"/><rect x="2407.44" y="636.4" width="6.88" height="1.1" fill="#c9c9c3" opacity="0.5"/><rect x="2414.32" y="636.4" width="9.46" height="1.1" fill="#c9bf63" opacity="0.65"/><rect x="2423.78" y="636.4" width="1.72" height="1.1" fill="#c9c9c3" opacity="0.5"/><rect x="2407.44" y="638.4" width="9.46" height="1.1" fill="#c9c9c3" opacity="0.5"/><rect x="2416.90" y="638.4" width="7.74" height="1.1" fill="#c9bf63" opacity="0.65"/><rect x="2424.64" y="638.4" width="1.72" height="1.1" fill="#c9c9c3" opacity="0.5"/><rect x="2407.44" y="640.4" width="6.02" height="1.1" fill="#c9c9c3" opacity="0.5"/><rect x="2404.00" y="644.4" width="16.34" height="1.1" fill="#c9c9c3" opacity="0.5"/><rect x="2421.20" y="644.4" width="0.86" height="1.1" fill="#d4245f" opacity="0.65"/><rect x="2422.92" y="644.4" width="10.32" height="1.1" fill="#c9c9c3" opacity="0.5"/><rect x="2433.24" y="644.4" width="14.62" height="1.1" fill="#c9bf63" opacity="0.65"/><rect x="2447.86" y="644.4" width="1.72" height="1.1" fill="#c9c9c3" opacity="0.5"/><rect x="2407.44" y="646.4" width="6.88" height="1.1" fill="#c9c9c3" opacity="0.5"/><rect x="2414.32" y="646.4" width="16.34" height="1.1" fill="#c9bf63" opacity="0.65"/><rect x="2430.66" y="646.4" width="1.72" height="1.1" fill="#c9c9c3" opacity="0.5"/><rect x="2407.44" y="648.4" width="6.88" height="1.1" fill="#c9c9c3" opacity="0.5"/><rect x="2414.32" y="648.4" width="7.74" height="1.1" fill="#c9bf63" opacity="0.65"/><rect x="2422.06" y="648.4" width="1.72" height="1.1" fill="#c9c9c3" opacity="0.5"/><rect x="2407.44" y="650.4" width="9.46" height="1.1" fill="#c9c9c3" opacity="0.5"/><rect x="2416.90" y="650.4" width="9.46" height="1.1" fill="#c9bf63" opacity="0.65"/><rect x="2426.36" y="650.4" width="1.72" height="1.1" fill="#c9c9c3" opacity="0.5"/><rect x="2407.44" y="652.4" width="6.02" height="1.1" fill="#c9c9c3" opacity="0.5"/><rect x="2404.00" y="658.4" width="18.92" height="1.1" fill="#c9c9c3" opacity="0.5"/><rect x="2423.78" y="658.4" width="0.86" height="1.1" fill="#d4245f" opacity="0.65"/><rect x="2425.50" y="658.4" width="10.32" height="1.1" fill="#c9c9c3" opacity="0.5"/><rect x="2435.82" y="658.4" width="17.20" height="1.1" fill="#c9bf63" opacity="0.65"/><rect x="2453.02" y="658.4" width="1.72" height="1.1" fill="#c9c9c3" opacity="0.5"/><rect x="2407.44" y="660.4" width="6.88" height="1.1" fill="#c9c9c3" opacity="0.5"/><rect x="2414.32" y="660.4" width="16.34" height="1.1" fill="#c9bf63" opacity="0.65"/><rect x="2430.66" y="660.4" width="1.72" height="1.1" fill="#c9c9c3" opacity="0.5"/><rect x="2407.44" y="662.4" width="6.88" height="1.1" fill="#c9c9c3" opacity="0.5"/><rect x="2414.32" y="662.4" width="6.88" height="1.1" fill="#c9bf63" opacity="0.65"/><rect x="2421.20" y="662.4" width="1.72" height="1.1" fill="#c9c9c3" opacity="0.5"/><rect x="2407.44" y="664.4" width="9.46" height="1.1" fill="#c9c9c3" opacity="0.5"/><rect x="2416.90" y="664.4" width="10.32" height="1.1" fill="#c9bf63" opacity="0.65"/><rect x="2427.22" y="664.4" width="1.72" height="1.1" fill="#c9c9c3" opacity="0.5"/><rect x="2407.44" y="666.4" width="6.02" height="1.1" fill="#c9c9c3" opacity="0.5"/><rect x="2404.00" y="672.4" width="13.76" height="1.1" fill="#c9c9c3" opacity="0.5"/><rect x="2418.62" y="672.4" width="0.86" height="1.1" fill="#d4245f" opacity="0.65"/><rect x="2420.34" y="672.4" width="10.32" height="1.1" fill="#c9c9c3" opacity="0.5"/><rect x="2430.66" y="672.4" width="12.90" height="1.1" fill="#c9bf63" opacity="0.65"/><rect x="2443.56" y="672.4" width="1.72" height="1.1" fill="#c9c9c3" opacity="0.5"/><rect x="2407.44" y="674.4" width="6.88" height="1.1" fill="#c9c9c3" opacity="0.5"/><rect x="2414.32" y="674.4" width="12.90" height="1.1" fill="#c9bf63" opacity="0.65"/><rect x="2427.22" y="674.4" width="1.72" height="1.1" fill="#c9c9c3" opacity="0.5"/><rect x="2407.44" y="676.4" width="6.88" height="1.1" fill="#c9c9c3" opacity="0.5"/><rect x="2414.32" y="676.4" width="13.76" height="1.1" fill="#c9bf63" opacity="0.65"/><rect x="2428.08" y="676.4" width="1.72" height="1.1" fill="#c9c9c3" opacity="0.5"/><rect x="2407.44" y="678.4" width="6.02" height="1.1" fill="#c9c9c3" opacity="0.5"/><rect x="2404.00" y="682.4" width="18.92" height="1.1" fill="#c9c9c3" opacity="0.5"/><rect x="2423.78" y="682.4" width="0.86" height="1.1" fill="#d4245f" opacity="0.65"/><rect x="2425.50" y="682.4" width="10.32" height="1.1" fill="#c9c9c3" opacity="0.5"/><rect x="2435.82" y="682.4" width="17.20" height="1.1" fill="#c9bf63" opacity="0.65"/><rect x="2453.02" y="682.4" width="1.72" height="1.1" fill="#c9c9c3" opacity="0.5"/><rect x="2407.44" y="684.4" width="6.88" height="1.1" fill="#c9c9c3" opacity="0.5"/><rect x="2414.32" y="684.4" width="13.76" height="1.1" fill="#c9bf63" opacity="0.65"/><rect x="2428.08" y="684.4" width="1.72" height="1.1" fill="#c9c9c3" opacity="0.5"/><rect x="2407.44" y="686.4" width="6.88" height="1.1" fill="#c9c9c3" opacity="0.5"/><rect x="2414.32" y="686.4" width="11.18" height="1.1" fill="#c9bf63" opacity="0.65"/><rect x="2425.50" y="686.4" width="1.72" height="1.1" fill="#c9c9c3" opacity="0.5"/><rect x="2407.44" y="688.4" width="6.02" height="1.1" fill="#c9c9c3" opacity="0.5"/><rect x="2404.00" y="692.4" width="22.36" height="1.1" fill="#c9c9c3" opacity="0.5"/><rect x="2427.22" y="692.4" width="0.86" height="1.1" fill="#d4245f" opacity="0.65"/><rect x="2428.94" y="692.4" width="10.32" height="1.1" fill="#c9c9c3" opacity="0.5"/><rect x="2439.26" y="692.4" width="18.92" height="1.1" fill="#c9bf63" opacity="0.65"/><rect x="2458.18" y="692.4" width="1.72" height="1.1" fill="#c9c9c3" opacity="0.5"/><rect x="2407.44" y="694.4" width="6.88" height="1.1" fill="#c9c9c3" opacity="0.5"/><rect x="2414.32" y="694.4" width="13.76" height="1.1" fill="#c9bf63" opacity="0.65"/><rect x="2428.08" y="694.4" width="1.72" height="1.1" fill="#c9c9c3" opacity="0.5"/><rect x="2407.44" y="696.4" width="6.88" height="1.1" fill="#c9c9c3" opacity="0.5"/><rect x="2414.32" y="696.4" width="12.90" height="1.1" fill="#c9bf63" opacity="0.65"/><rect x="2427.22" y="696.4" width="1.72" height="1.1" fill="#c9c9c3" opacity="0.5"/><rect x="2407.44" y="698.4" width="6.02" height="1.1" fill="#c9c9c3" opacity="0.5"/><rect x="2404.00" y="706.4" width="17.20" height="1.1" fill="#6b6755" opacity="0.65"/><rect x="2404.00" y="708.4" width="6.02" height="1.1" fill="#c9c9c3" opacity="0.5"/><rect x="2410.88" y="708.4" width="0.86" height="1.1" fill="#d4245f" opacity="0.65"/><rect x="2412.60" y="708.4" width="0.86" height="1.1" fill="#c9c9c3" opacity="0.5"/><rect x="2407.44" y="710.4" width="10.32" height="1.1" fill="#c9bf63" opacity="0.65"/><rect x="2418.62" y="710.4" width="1.72" height="1.1" fill="#c9c9c3" opacity="0.5"/><rect x="2421.20" y="710.4" width="12.04" height="1.1" fill="#c9c9c3" opacity="0.5"/><rect x="2407.44" y="712.4" width="10.32" height="1.1" fill="#c9bf63" opacity="0.65"/><rect x="2418.62" y="712.4" width="1.72" height="1.1" fill="#c9c9c3" opacity="0.5"/><rect x="2421.20" y="712.4" width="11.18" height="1.1" fill="#c9c9c3" opacity="0.5"/><rect x="2407.44" y="714.4" width="11.18" height="1.1" fill="#c9bf63" opacity="0.65"/><rect x="2419.48" y="714.4" width="1.72" height="1.1" fill="#c9c9c3" opacity="0.5"/><rect x="2422.06" y="714.4" width="12.90" height="1.1" fill="#c9c9c3" opacity="0.5"/><rect x="2407.44" y="716.4" width="11.18" height="1.1" fill="#c9bf63" opacity="0.65"/><rect x="2419.48" y="716.4" width="1.72" height="1.1" fill="#c9c9c3" opacity="0.5"/><rect x="2422.06" y="716.4" width="12.90" height="1.1" fill="#c9c9c3" opacity="0.5"/><rect x="2407.44" y="718.4" width="13.76" height="1.1" fill="#c9bf63" opacity="0.65"/><rect x="2422.06" y="718.4" width="1.72" height="1.1" fill="#c9c9c3" opacity="0.5"/><rect x="2424.64" y="718.4" width="13.76" height="1.1" fill="#c9c9c3" opacity="0.5"/><rect x="2407.44" y="720.4" width="12.04" height="1.1" fill="#c9bf63" opacity="0.65"/><rect x="2420.34" y="720.4" width="1.72" height="1.1" fill="#c9c9c3" opacity="0.5"/><rect x="2422.92" y="720.4" width="12.04" height="1.1" fill="#c9c9c3" opacity="0.5"/><rect x="2407.44" y="722.4" width="10.32" height="1.1" fill="#c9bf63" opacity="0.65"/><rect x="2418.62" y="722.4" width="1.72" height="1.1" fill="#c9c9c3" opacity="0.5"/><rect x="2421.20" y="722.4" width="10.32" height="1.1" fill="#c9c9c3" opacity="0.5"/><rect x="2407.44" y="724.4" width="8.60" height="1.1" fill="#c9bf63" opacity="0.65"/><rect x="2416.90" y="724.4" width="1.72" height="1.1" fill="#c9c9c3" opacity="0.5"/><rect x="2419.48" y="724.4" width="9.46" height="1.1" fill="#c9c9c3" opacity="0.5"/><rect x="2407.44" y="726.4" width="8.60" height="1.1" fill="#c9bf63" opacity="0.65"/><rect x="2416.90" y="726.4" width="1.72" height="1.1" fill="#c9c9c3" opacity="0.5"/><rect x="2419.48" y="726.4" width="8.60" height="1.1" fill="#c9c9c3" opacity="0.5"/><rect x="2407.44" y="728.4" width="8.60" height="1.1" fill="#c9bf63" opacity="0.65"/><rect x="2416.90" y="728.4" width="1.72" height="1.1" fill="#c9c9c3" opacity="0.5"/><rect x="2419.48" y="728.4" width="8.60" height="1.1" fill="#c9c9c3" opacity="0.5"/><rect x="2407.44" y="730.4" width="11.18" height="1.1" fill="#c9bf63" opacity="0.65"/><rect x="2419.48" y="730.4" width="1.72" height="1.1" fill="#c9c9c3" opacity="0.5"/><rect x="2422.06" y="730.4" width="12.04" height="1.1" fill="#c9c9c3" opacity="0.5"/><rect x="2407.44" y="732.4" width="11.18" height="1.1" fill="#c9bf63" opacity="0.65"/><rect x="2419.48" y="732.4" width="1.72" height="1.1" fill="#c9c9c3" opacity="0.5"/><rect x="2422.06" y="732.4" width="12.04" height="1.1" fill="#c9c9c3" opacity="0.5"/><rect x="2407.44" y="734.4" width="13.76" height="1.1" fill="#c9bf63" opacity="0.65"/><rect x="2422.06" y="734.4" width="1.72" height="1.1" fill="#c9c9c3" opacity="0.5"/><rect x="2424.64" y="734.4" width="12.90" height="1.1" fill="#c9c9c3" opacity="0.5"/><rect x="2407.44" y="736.4" width="14.62" height="1.1" fill="#c9bf63" opacity="0.65"/><rect x="2422.92" y="736.4" width="1.72" height="1.1" fill="#c9c9c3" opacity="0.5"/><rect x="2425.50" y="736.4" width="14.62" height="1.1" fill="#c9c9c3" opacity="0.5"/><rect x="2407.44" y="738.4" width="12.90" height="1.1" fill="#c9bf63" opacity="0.65"/><rect x="2421.20" y="738.4" width="1.72" height="1.1" fill="#c9c9c3" opacity="0.5"/><rect x="2423.78" y="738.4" width="12.04" height="1.1" fill="#c9c9c3" opacity="0.5"/><rect x="2407.44" y="740.4" width="11.18" height="1.1" fill="#c9bf63" opacity="0.65"/><rect x="2419.48" y="740.4" width="1.72" height="1.1" fill="#c9c9c3" opacity="0.5"/><rect x="2422.06" y="740.4" width="11.18" height="1.1" fill="#c9c9c3" opacity="0.5"/><rect x="2404.00" y="742.4" width="0.86" height="1.1" fill="#c9c9c3" opacity="0.5"/><rect x="2404.00" y="746.4" width="36.12" height="1.1" fill="#6b6755" opacity="0.65"/><rect x="2404.00" y="748.4" width="34.40" height="1.1" fill="#6b6755" opacity="0.65"/><rect x="2439.26" y="748.4" width="22.36" height="1.1" fill="#6b6755" opacity="0.65"/><rect x="2422.92" y="750.4" width="17.20" height="1.1" fill="#6b6755" opacity="0.65"/><rect x="2404.00" y="752.4" width="32.68" height="1.1" fill="#6b6755" opacity="0.65"/><rect x="2404.00" y="754.4" width="16.34" height="1.1" fill="#c9c9c3" opacity="0.5"/><rect x="2421.20" y="754.4" width="0.86" height="1.1" fill="#d4245f" opacity="0.65"/><rect x="2422.92" y="754.4" width="15.48" height="1.1" fill="#c9c9c3" opacity="0.5"/><rect x="2404.00" y="758.4" width="10.32" height="1.1" fill="#c9c9c3" opacity="0.5"/><rect x="2415.18" y="758.4" width="0.86" height="1.1" fill="#d4245f" opacity="0.65"/><rect x="2416.90" y="758.4" width="9.46" height="1.1" fill="#c9c9c3" opacity="0.5"/><rect x="2427.22" y="758.4" width="8.60" height="1.1" fill="#c9c9c3" opacity="0.5"/><rect x="2436.68" y="758.4" width="15.48" height="1.1" fill="#c9c9c3" opacity="0.5"/><rect x="2453.02" y="758.4" width="9.46" height="1.1" fill="#c9c9c3" opacity="0.5"/><rect x="2463.34" y="758.4" width="17.20" height="1.1" fill="#c9c9c3" opacity="0.5"/><rect x="2481.40" y="758.4" width="17.20" height="1.1" fill="#c9c9c3" opacity="0.5"/><rect x="2499.46" y="758.4" width="17.20" height="1.1" fill="#c9c9c3" opacity="0.5"/><rect x="2517.52" y="758.4" width="10.48" height="1.1" fill="#c9c9c3" opacity="0.5"/></svg>
<div style="position:absolute;left:0px;top:1397px;width:2560px;height:43px;background:linear-gradient(#5e5e5e,#525252)"></div>
<div style="position:absolute;left:0px;top:1397px;width:2560px;height:2px;background:#7a7a7a"></div>
<svg style="position:absolute;left:19px;top:1408px" width="27" height="22" viewBox="0 0 27 22"><rect x="2" y="1.5" width="23" height="19" fill="none" stroke="#c9c9c9" stroke-width="2.2"/><path d="M2 14 H25" stroke="#c9c9c9" stroke-width="2"/></svg>
<div id="line" style="position:absolute;left:61.99px;top:1405.67px;font:400 22.6px/27px 'Liberation Sans',sans-serif;color:#f2f2f2;white-space:pre;transform:scale(1.0107,1.0000);transform-origin:0 21.33px;">Line 3, Column 1</div>
<div style="position:absolute;left:2172px;top:1398px;width:2px;height:42px;background:#787878"></div>
<div style="position:absolute;left:2362px;top:1398px;width:2px;height:42px;background:#787878"></div>
<div id="spaces" style="position:absolute;left:2217.47px;top:1405.03px;font:400 23px/28px 'Liberation Sans',sans-serif;color:#f2f2f2;white-space:pre;transform:scale(0.9429,1.0000);transform-origin:0 21.97px;">Spaces: 4</div>
<div id="python" style="position:absolute;left:2418.75px;top:1405.03px;font:400 23px/28px 'Liberation Sans',sans-serif;color:#f2f2f2;white-space:pre;transform:scale(1.0318,1.0000);transform-origin:0 21.97px;">Python</div></body></html>
